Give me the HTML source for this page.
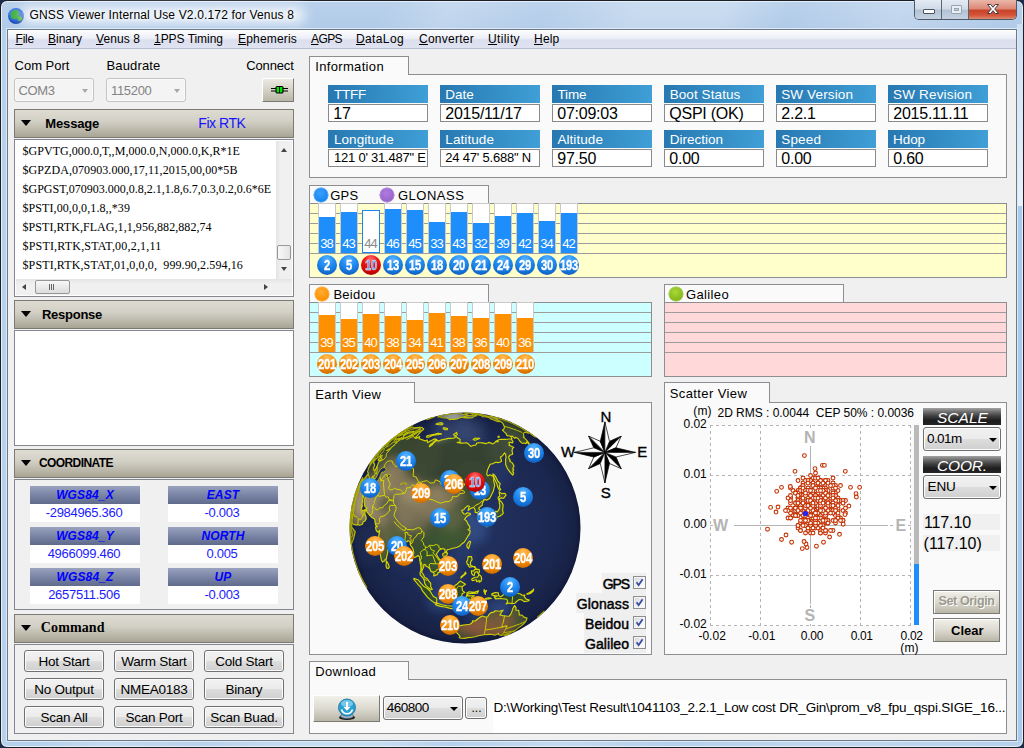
<!DOCTYPE html><html><head><meta charset="utf-8"><title>GNSS Viewer</title><style>*{box-sizing:border-box;margin:0;padding:0}
html,body{width:1024px;height:748px;overflow:hidden;background:#1b2c4e;}
body{font-family:"Liberation Sans",sans-serif;font-size:13px;color:#000;position:relative}
.a{position:absolute}
.t{position:absolute;white-space:pre;line-height:1}
#frame{left:0;top:0;width:1024px;height:748px;background:linear-gradient(115deg,rgba(255,255,255,0) 0,rgba(255,255,255,0) 28%,rgba(255,255,255,.2) 33%,rgba(255,255,255,.04) 40%,rgba(255,255,255,.26) 47%,rgba(255,255,255,.26) 53%,rgba(255,255,255,0) 58%,rgba(255,255,255,.2) 66%,rgba(255,255,255,0) 74%,rgba(255,255,255,.14) 86%,rgba(255,255,255,0) 100%),linear-gradient(#b9d1eb 0,#b0cae8 28px,#b6d1ec 30px);border:1px solid #1c2026;border-radius:7px 7px 7px 7px;box-shadow:inset 0 0 0 1px #e4effa}
#client{left:7px;top:29px;width:1010px;height:712px;background:#f0f0f0;border:1px solid #6d7986;box-shadow:0 0 0 1px #dce9f7}
#menubar{left:8px;top:30px;width:1008px;height:19px;background:linear-gradient(#fdfdfe 0,#eef0f8 45%,#dcdfee 55%,#dfe2f0 100%);border-bottom:1px solid #b8bfd3}
.hdr{position:absolute;left:14px;width:280px;height:29px;border:1px solid #7b7a74;background:linear-gradient(#dedcd2 0,#d3d0c6 40%,#b7b4a6 80%,#a7a494 100%);}
.tri{position:absolute;width:0;height:0;border-left:5px solid transparent;border-right:5px solid transparent;border-top:6px solid #000}
.box{position:absolute;left:14px;width:280px;border:1px solid #828790;background:#fff}
.tab{position:absolute;background:#fafafa;border:1px solid #8c8e91;border-bottom:none}
.panel{position:absolute;border:1px solid #8c8e91;background:#fafafa}
.lab{position:absolute;width:100px;height:18px;background:linear-gradient(90deg,#2878b1,#3f9fd6)}
.val{position:absolute;width:100px;height:18px;background:#fff;border:1px solid #8a8a8a}
.clab{position:absolute;width:110px;height:18px;background:linear-gradient(#9aa3be 0,#7a85a6 50%,#5f6a8c 100%)}
.cval{position:absolute;width:110px;height:18px;background:#fff}
.btn{position:absolute;width:80px;height:22px;border:1px solid #707070;border-radius:3px;background:linear-gradient(#f2f2f2 0,#ebebeb 48%,#dddddd 52%,#cfcfcf 100%);box-shadow:inset 0 0 0 1px #fcfcfc}
.ctr{position:absolute;white-space:pre;text-align:center}
.snr{position:absolute;width:16px;text-align:center;font-size:13px;line-height:13px;color:#fff;letter-spacing:-.8px;text-indent:-.8px}
.ball{position:absolute;width:20px;height:20px;border-radius:50%;text-align:center}
.ball i{display:block;font-style:normal;font-weight:bold;font-size:14px;line-height:14px;margin:3px -6px 0 -6px;color:#fff;letter-spacing:-.2px;transform:scaleX(.8);-webkit-text-stroke:.4px #fff;text-shadow:0 0 1px rgba(0,0,40,.3)}
.ball.blue{background:radial-gradient(circle at 50% 22%,#58b4ff 0,#2590f6 35%,#1678de 62%,#0a4ea8 100%)}
.ball.org{background:radial-gradient(circle at 50% 22%,#ffc060 0,#ff9a10 35%,#ee8200 62%,#b05a00 100%)}
.ball.red{background:radial-gradient(circle at 50% 22%,#ff7070 0,#f01818 35%,#d80808 62%,#8a0000 100%)}
.blk{position:absolute;width:78px;height:17px;background:linear-gradient(#a2a2a2 0,#707070 22%,#3e3e3e 48%,#1c1c1c 75%,#262626 100%)}
.cmb{position:absolute;width:78px;height:24px;border:1px solid #707070;border-radius:3px;background:linear-gradient(#f2f2f2 0,#ebebeb 48%,#dddddd 52%,#cfcfcf 100%);box-shadow:inset 0 0 0 1px #fcfcfc}
.arr{position:absolute;width:0;height:0;border-left:4px solid transparent;border-right:4px solid transparent;border-top:4px solid #000}
.obtn{position:absolute;width:67px;height:24px;border:1px solid #7b7a74;background:linear-gradient(#f1f0ea 0,#dcdad0 50%,#b9b6a7 100%);box-shadow:inset 1px 1px 0 #fff}
</style></head><body>
<div id="frame" class="a"></div>
<div class="a" style="left:8px;top:8px;width:16px;height:16px;border-radius:50%;background:radial-gradient(circle at 40% 35%,#5fb0ff 0,#1d55c8 55%,#0a2a80 100%);overflow:hidden"><div class="a" style="left:3px;top:2px;width:8px;height:9px;background:#3fae3a;border-radius:50% 40% 60% 30%"></div><div class="a" style="left:9px;top:8px;width:5px;height:5px;background:#3fae3a;border-radius:50%"></div></div>
<div class="a" style="left:20px;top:6px;width:286px;height:18px;background:rgba(255,255,255,.72);filter:blur(6px);border-radius:9px"></div>
<div class="t" style="left:29.50px;top:8.84px;font:12px 'Liberation Sans',sans-serif;line-height:12px;letter-spacing:0.161px;text-shadow:0 0 5px #fff,0 0 5px #fff;">GNSS Viewer Internal Use V2.0.172 for Venus 8</div>
<div class="a" style="left:914px;top:0;width:103px;height:20px;border:1px solid #4f5a66;border-top:none;border-radius:0 0 5px 5px;overflow:hidden;background:#c3d1e2"><div class="a" style="left:0;top:0;width:27px;height:19px;background:linear-gradient(#e3ebf4 0,#d0dbe8 48%,#b1c1d4 52%,#c4d2e2 100%);border-right:1px solid #5c6672"></div><div class="a" style="left:27px;top:0;width:27px;height:19px;background:linear-gradient(#e3ebf4 0,#d0dbe8 48%,#b1c1d4 52%,#c4d2e2 100%);border-right:1px solid #5c6672"></div><div class="a" style="left:54px;top:0;width:48px;height:19px;background:linear-gradient(#eab7a9 0,#dc8a78 45%,#c8432a 55%,#d4553a 80%,#dd8a70 100%)"></div><div class="a" style="left:8px;top:9px;width:12px;height:5px;background:#fff;border:1px solid #4a5462;border-radius:1px"></div><div class="a" style="left:36px;top:5px;width:11px;height:9px;border:1px solid #9aa3ae;background:#e8eef5;border-radius:1px"><div class="a" style="left:2px;top:2px;width:5px;height:3px;border:1px solid #9aa3ae;background:#c8d1dc"></div></div><svg class="a" style="left:71px;top:3px" width="14" height="12" viewBox="0 0 14 12"><path d="M1.5 1.5h3.2L7 4.3 9.3 1.5h3.2L8.7 6l3.8 4.5H9.3L7 7.7 4.7 10.5H1.5L5.3 6z" fill="#fff" stroke="#4a3a40" stroke-width="1"/></svg></div>
<div class="a" style="left:1017px;top:24px;width:6px;height:182px;background:linear-gradient(#cfe0f4,#e9f1fa)"></div><div class="a" style="left:1017px;top:206px;width:6px;height:535px;background:#abcaeb;box-shadow:inset 1px 0 0 #dce9f7,inset -1px 0 0 #e4effa"></div>
<div id="client" class="a"></div><div id="menubar" class="a"></div>
<div class="t" style="left:15.5px;top:32.84px;font:12px 'Liberation Sans',sans-serif;line-height:12px;letter-spacing:-0.211px"><u style="text-underline-offset:1px">F</u>ile</div>
<div class="t" style="left:48.0px;top:32.84px;font:12px 'Liberation Sans',sans-serif;line-height:12px;letter-spacing:-0.003px"><u style="text-underline-offset:1px">B</u>inary</div>
<div class="t" style="left:96.0px;top:32.84px;font:12px 'Liberation Sans',sans-serif;line-height:12px;letter-spacing:0.089px"><u style="text-underline-offset:1px">V</u>enus 8</div>
<div class="t" style="left:154.0px;top:32.84px;font:12px 'Liberation Sans',sans-serif;line-height:12px;letter-spacing:-0.034px"><u style="text-underline-offset:1px">1</u>PPS Timing</div>
<div class="t" style="left:238.0px;top:32.84px;font:12px 'Liberation Sans',sans-serif;line-height:12px;letter-spacing:0.182px"><u style="text-underline-offset:1px">E</u>phemeris</div>
<div class="t" style="left:311.0px;top:32.84px;font:12px 'Liberation Sans',sans-serif;line-height:12px;letter-spacing:-0.590px"><u style="text-underline-offset:1px">A</u>GPS</div>
<div class="t" style="left:356.0px;top:32.84px;font:12px 'Liberation Sans',sans-serif;line-height:12px;letter-spacing:0.375px"><u style="text-underline-offset:1px">D</u>ataLog</div>
<div class="t" style="left:419.0px;top:32.84px;font:12px 'Liberation Sans',sans-serif;line-height:12px;letter-spacing:0.257px"><u style="text-underline-offset:1px">C</u>onverter</div>
<div class="t" style="left:488.0px;top:32.84px;font:12px 'Liberation Sans',sans-serif;line-height:12px;letter-spacing:0.379px"><u style="text-underline-offset:1px">U</u>tility</div>
<div class="t" style="left:534.0px;top:32.84px;font:12px 'Liberation Sans',sans-serif;line-height:12px;letter-spacing:0.203px"><u style="text-underline-offset:1px">H</u>elp</div>
<div class="t" style="left:14.50px;top:59.00px;font:13px 'Liberation Sans',sans-serif;line-height:13px;letter-spacing:0.012px;">Com Port</div>
<div class="t" style="left:106.50px;top:59.00px;font:13px 'Liberation Sans',sans-serif;line-height:13px;letter-spacing:0.154px;">Baudrate</div>
<div class="t" style="left:246.30px;top:59.00px;font:13px 'Liberation Sans',sans-serif;line-height:13px;letter-spacing:-0.160px;">Connect</div>
<div class="a" style="left:14px;top:78px;width:80px;height:24px;border:1px solid #c3c3c3;border-radius:3px;background:#f4f4f4;box-shadow:inset 0 0 0 1px #fbfbfb"></div>
<div class="t" style="left:18.40px;top:83.80px;font:13px 'Liberation Sans',sans-serif;line-height:13px;letter-spacing:-0.316px;color:#838383;">COM3</div>
<div class="arr" style="left:82px;top:89px;border-top-color:#a8a8a8;border-left-width:3.5px;border-right-width:3.5px"></div>
<div class="a" style="left:106px;top:78px;width:80px;height:24px;border:1px solid #c3c3c3;border-radius:3px;background:#f4f4f4;box-shadow:inset 0 0 0 1px #fbfbfb"></div>
<div class="t" style="left:111.00px;top:83.80px;font:13px 'Liberation Sans',sans-serif;line-height:13px;letter-spacing:-0.320px;color:#838383;">115200</div>
<div class="arr" style="left:174px;top:89px;border-top-color:#a8a8a8;border-left-width:3.5px;border-right-width:3.5px"></div>
<div class="a" style="left:262px;top:78px;width:32px;height:24px;border:1px solid #7a7a72;border-top-color:#fff;border-left-color:#fff;background:linear-gradient(#eceae2,#d2cfc3 55%,#b9b6a7)"><svg class="a" style="left:8px;top:6px" width="17" height="10" viewBox="0 0 17 10"><rect x="0" y="3" width="17" height="1" fill="#000"/><rect x="0" y="5.5" width="17" height="1" fill="#000"/><rect x="4.5" y="1" width="8" height="7.5" rx="1.5" fill="#000"/><rect x="5.6" y="2" width="2.4" height="5.5" fill="#00e400"/><rect x="9" y="2" width="2.4" height="5.5" fill="#00e400"/></svg></div>
<div class="hdr" style="top:109px"></div><div class="tri" style="left:21px;top:120px"></div>
<div class="t" style="left:45.30px;top:116.70px;font:bold 13px 'Liberation Sans',sans-serif;line-height:13px;letter-spacing:-0.146px;">Message</div>
<div class="t" style="left:198.30px;top:115.85px;font:14px 'Liberation Sans',sans-serif;line-height:14px;letter-spacing:-0.445px;color:#1414ff;">Fix RTK</div>
<div class="box" style="top:139px;height:158px"></div>
<div class="t" style="left:22.50px;top:144.65px;font:12px 'Liberation Serif',serif;line-height:12px;letter-spacing:0.045px;">$GPVTG,000.0,T,,M,000.0,N,000.0,K,R*1E</div>
<div class="t" style="left:22.50px;top:163.75px;font:12px 'Liberation Serif',serif;line-height:12px;letter-spacing:0.066px;">$GPZDA,070903.000,17,11,2015,00,00*5B</div>
<div class="t" style="left:22.50px;top:182.85px;font:12px 'Liberation Serif',serif;line-height:12px;letter-spacing:0.001px;">$GPGST,070903.000,0.8,2.1,1.8,6.7,0.3,0.2,0.6*6E</div>
<div class="t" style="left:22.50px;top:201.95px;font:12px 'Liberation Serif',serif;line-height:12px;letter-spacing:0.086px;">$PSTI,00,0,0,1.8,,*39</div>
<div class="t" style="left:22.50px;top:221.05px;font:12px 'Liberation Serif',serif;line-height:12px;letter-spacing:0.055px;">$PSTI,RTK,FLAG,1,1,956,882,882,74</div>
<div class="t" style="left:22.50px;top:240.15px;font:12px 'Liberation Serif',serif;line-height:12px;letter-spacing:0.190px;">$PSTI,RTK,STAT,00,2,1,11</div>
<div class="t" style="left:22.50px;top:259.25px;font:12px 'Liberation Serif',serif;line-height:12px;letter-spacing:0.115px;">$PSTI,RTK,STAT,01,0,0,0,  999.90,2.594,16</div>
<div class="a" style="left:276px;top:141px;width:16px;height:138px;background:linear-gradient(90deg,#e4e4e4,#f0f0f0 30%,#f0f0f0)"></div>
<div class="a" style="left:16px;top:279px;width:276px;height:16px;background:linear-gradient(#e4e4e4,#f0f0f0 30%,#f0f0f0)"></div>
<div class="a" style="left:280.5px;top:148px;width:0;height:0;border-left:3.75px solid transparent;border-right:3.75px solid transparent;border-bottom:4.5px solid #444"></div>
<div class="a" style="left:280.5px;top:267px;width:0;height:0;border-left:3.75px solid transparent;border-right:3.75px solid transparent;border-top:4.5px solid #444"></div>
<div class="a" style="left:277px;top:245px;width:14px;height:15px;border:1px solid #979797;border-radius:2px;background:linear-gradient(90deg,#f8f8f8,#e4e4e4)"></div>
<div class="a" style="left:22px;top:283.5px;width:0;height:0;border-top:3.75px solid transparent;border-bottom:3.75px solid transparent;border-right:4.5px solid #444"></div>
<div class="a" style="left:264px;top:283.5px;width:0;height:0;border-top:3.75px solid transparent;border-bottom:3.75px solid transparent;border-left:4.5px solid #444"></div>
<div class="a" style="left:35px;top:280px;width:35px;height:14px;border:1px solid #979797;border-radius:2px;background:linear-gradient(#f8f8f8,#dcdcdc)"><div class="a" style="left:13px;top:3px;width:1px;height:6px;background:#666;box-shadow:2px 0 0 #666,4px 0 0 #666"></div></div>
<div class="hdr" style="top:300px"></div><div class="tri" style="left:21px;top:311px"></div>
<div class="t" style="left:42.00px;top:307.70px;font:bold 13px 'Liberation Sans',sans-serif;line-height:13px;letter-spacing:-0.268px;">Response</div>
<div class="box" style="top:330px;height:116px"></div>
<div class="hdr" style="top:449px"></div><div class="tri" style="left:21px;top:460px"></div>
<div class="t" style="left:38.90px;top:457.34px;font:bold 12px 'Liberation Sans',sans-serif;line-height:12px;letter-spacing:-0.568px;">COORDINATE</div>
<div class="box" style="top:479px;height:131px;background:#f0f0f0"></div>
<div class="clab" style="left:30px;top:486px"></div><div class="cval" style="left:30px;top:504px"></div>
<div class="ctr" style="left:30px;top:488.84px;width:110px;font:italic bold 12px 'Liberation Sans',sans-serif;line-height:12px;color:#0000ff;letter-spacing:.14px">WGS84_X</div>
<div class="ctr" style="left:29px;top:506.00px;width:110px;font:13px 'Liberation Sans',sans-serif;line-height:13px;color:#1a1aff;letter-spacing:-.3px">-2984965.360</div>
<div class="clab" style="left:168px;top:486px"></div><div class="cval" style="left:168px;top:504px"></div>
<div class="ctr" style="left:168px;top:488.84px;width:110px;font:italic bold 12px 'Liberation Sans',sans-serif;line-height:12px;color:#0000ff;letter-spacing:.14px">EAST</div>
<div class="ctr" style="left:167px;top:506.00px;width:110px;font:13px 'Liberation Sans',sans-serif;line-height:13px;color:#1a1aff;letter-spacing:-.3px">-0.003</div>
<div class="clab" style="left:30px;top:527px"></div><div class="cval" style="left:30px;top:545px"></div>
<div class="ctr" style="left:30px;top:529.84px;width:110px;font:italic bold 12px 'Liberation Sans',sans-serif;line-height:12px;color:#0000ff;letter-spacing:.14px">WGS84_Y</div>
<div class="ctr" style="left:29px;top:547.00px;width:110px;font:13px 'Liberation Sans',sans-serif;line-height:13px;color:#1a1aff;letter-spacing:-.3px">4966099.460</div>
<div class="clab" style="left:168px;top:527px"></div><div class="cval" style="left:168px;top:545px"></div>
<div class="ctr" style="left:168px;top:529.84px;width:110px;font:italic bold 12px 'Liberation Sans',sans-serif;line-height:12px;color:#0000ff;letter-spacing:.14px">NORTH</div>
<div class="ctr" style="left:167px;top:547.00px;width:110px;font:13px 'Liberation Sans',sans-serif;line-height:13px;color:#1a1aff;letter-spacing:-.3px">0.005</div>
<div class="clab" style="left:30px;top:568px"></div><div class="cval" style="left:30px;top:586px"></div>
<div class="ctr" style="left:30px;top:570.84px;width:110px;font:italic bold 12px 'Liberation Sans',sans-serif;line-height:12px;color:#0000ff;letter-spacing:.14px">WGS84_Z</div>
<div class="ctr" style="left:29px;top:588.00px;width:110px;font:13px 'Liberation Sans',sans-serif;line-height:13px;color:#1a1aff;letter-spacing:-.3px">2657511.506</div>
<div class="clab" style="left:168px;top:568px"></div><div class="cval" style="left:168px;top:586px"></div>
<div class="ctr" style="left:168px;top:570.84px;width:110px;font:italic bold 12px 'Liberation Sans',sans-serif;line-height:12px;color:#0000ff;letter-spacing:.14px">UP</div>
<div class="ctr" style="left:167px;top:588.00px;width:110px;font:13px 'Liberation Sans',sans-serif;line-height:13px;color:#1a1aff;letter-spacing:-.3px">-0.003</div>
<div class="hdr" style="top:614px"></div><div class="tri" style="left:21px;top:625px"></div>
<div class="t" style="left:40.80px;top:621.48px;font:bold 14px 'Liberation Serif',serif;line-height:14px;letter-spacing:0.126px;">Command</div>
<div class="box" style="top:644px;height:90px;background:#f0f0f0"></div>
<div class="btn" style="left:24px;top:650px"></div>
<div class="ctr" style="left:24px;top:654.97px;width:80px;font:13.5px 'Liberation Sans',sans-serif;line-height:13.5px;letter-spacing:-.25px">Hot Start</div>
<div class="btn" style="left:114px;top:650px"></div>
<div class="ctr" style="left:114px;top:654.97px;width:80px;font:13.5px 'Liberation Sans',sans-serif;line-height:13.5px;letter-spacing:-.25px">Warm Start</div>
<div class="btn" style="left:204px;top:650px"></div>
<div class="ctr" style="left:204px;top:654.97px;width:80px;font:13.5px 'Liberation Sans',sans-serif;line-height:13.5px;letter-spacing:-.25px">Cold Start</div>
<div class="btn" style="left:24px;top:678px"></div>
<div class="ctr" style="left:24px;top:682.97px;width:80px;font:13.5px 'Liberation Sans',sans-serif;line-height:13.5px;letter-spacing:-.25px">No Output</div>
<div class="btn" style="left:114px;top:678px"></div>
<div class="ctr" style="left:114px;top:682.97px;width:80px;font:13.5px 'Liberation Sans',sans-serif;line-height:13.5px;letter-spacing:-.25px">NMEA0183</div>
<div class="btn" style="left:204px;top:678px"></div>
<div class="ctr" style="left:204px;top:682.97px;width:80px;font:13.5px 'Liberation Sans',sans-serif;line-height:13.5px;letter-spacing:-.25px">Binary</div>
<div class="btn" style="left:24px;top:706px"></div>
<div class="ctr" style="left:24px;top:710.97px;width:80px;font:13.5px 'Liberation Sans',sans-serif;line-height:13.5px;letter-spacing:-.25px">Scan All</div>
<div class="btn" style="left:114px;top:706px"></div>
<div class="ctr" style="left:114px;top:710.97px;width:80px;font:13.5px 'Liberation Sans',sans-serif;line-height:13.5px;letter-spacing:-.25px">Scan Port</div>
<div class="btn" style="left:204px;top:706px"></div>
<div class="ctr" style="left:204px;top:710.97px;width:80px;font:13.5px 'Liberation Sans',sans-serif;line-height:13.5px;letter-spacing:-.25px">Scan Buad.</div>
<div class="panel" style="left:309px;top:74px;width:698px;height:104px"></div>
<div class="tab" style="left:309px;top:56px;width:100px;height:19px"></div>
<div class="t" style="left:315.20px;top:60.00px;font:13px 'Liberation Sans',sans-serif;line-height:13px;letter-spacing:0.341px;">Information</div>
<div class="lab" style="left:328px;top:85px"></div><div class="val" style="left:328px;top:104px"></div>
<div class="t" style="left:334.00px;top:88.07px;font:13.5px 'Liberation Sans',sans-serif;line-height:13.5px;letter-spacing:-0.250px;color:#fff;">TTFF</div>
<div class="t" style="left:333.30px;top:106.26px;font:16px 'Liberation Sans',sans-serif;line-height:16px;letter-spacing:-.25px;">17</div>
<div class="lab" style="left:440px;top:85px"></div><div class="val" style="left:440px;top:104px"></div>
<div class="t" style="left:445.30px;top:88.07px;font:13.5px 'Liberation Sans',sans-serif;line-height:13.5px;letter-spacing:0.017px;color:#fff;">Date</div>
<div class="t" style="left:445.30px;top:106.26px;font:16px 'Liberation Sans',sans-serif;line-height:16px;letter-spacing:-.25px;">2015/11/17</div>
<div class="lab" style="left:552px;top:85px"></div><div class="val" style="left:552px;top:104px"></div>
<div class="t" style="left:557.40px;top:88.07px;font:13.5px 'Liberation Sans',sans-serif;line-height:13.5px;letter-spacing:-0.100px;color:#fff;">Time</div>
<div class="t" style="left:557.30px;top:106.26px;font:16px 'Liberation Sans',sans-serif;line-height:16px;letter-spacing:-.25px;">07:09:03</div>
<div class="lab" style="left:664px;top:85px"></div><div class="val" style="left:664px;top:104px"></div>
<div class="t" style="left:669.70px;top:88.07px;font:13.5px 'Liberation Sans',sans-serif;line-height:13.5px;letter-spacing:0.082px;color:#fff;">Boot Status</div>
<div class="t" style="left:669.30px;top:106.26px;font:16px 'Liberation Sans',sans-serif;line-height:16px;letter-spacing:-.25px;">QSPI (OK)</div>
<div class="lab" style="left:776px;top:85px"></div><div class="val" style="left:776px;top:104px"></div>
<div class="t" style="left:781.20px;top:88.07px;font:13.5px 'Liberation Sans',sans-serif;line-height:13.5px;letter-spacing:0.137px;color:#fff;">SW Version</div>
<div class="t" style="left:781.30px;top:106.26px;font:16px 'Liberation Sans',sans-serif;line-height:16px;letter-spacing:-.25px;">2.2.1</div>
<div class="lab" style="left:888px;top:85px"></div><div class="val" style="left:888px;top:104px"></div>
<div class="t" style="left:893.10px;top:88.07px;font:13.5px 'Liberation Sans',sans-serif;line-height:13.5px;letter-spacing:0.165px;color:#fff;">SW Revision</div>
<div class="t" style="left:893.30px;top:106.26px;font:16px 'Liberation Sans',sans-serif;line-height:16px;letter-spacing:-.25px;">2015.11.11</div>
<div class="lab" style="left:328px;top:130px"></div><div class="val" style="left:328px;top:149px"></div>
<div class="t" style="left:334.00px;top:133.27px;font:13.5px 'Liberation Sans',sans-serif;line-height:13.5px;letter-spacing:0.043px;color:#fff;">Longitude</div>
<div class="t" style="left:334.00px;top:151.20px;font:13px 'Liberation Sans',sans-serif;line-height:13px;letter-spacing:-0.231px;">121 0' 31.487&quot; E</div>
<div class="lab" style="left:440px;top:130px"></div><div class="val" style="left:440px;top:149px"></div>
<div class="t" style="left:445.30px;top:133.27px;font:13.5px 'Liberation Sans',sans-serif;line-height:13.5px;letter-spacing:0.082px;color:#fff;">Latitude</div>
<div class="t" style="left:445.30px;top:151.20px;font:13px 'Liberation Sans',sans-serif;line-height:13px;letter-spacing:-0.205px;">24 47' 5.688&quot; N</div>
<div class="lab" style="left:552px;top:130px"></div><div class="val" style="left:552px;top:149px"></div>
<div class="t" style="left:557.40px;top:133.27px;font:13.5px 'Liberation Sans',sans-serif;line-height:13.5px;letter-spacing:0.071px;color:#fff;">Altitude</div>
<div class="t" style="left:557.30px;top:151.46px;font:16px 'Liberation Sans',sans-serif;line-height:16px;letter-spacing:-.25px;">97.50</div>
<div class="lab" style="left:664px;top:130px"></div><div class="val" style="left:664px;top:149px"></div>
<div class="t" style="left:669.70px;top:133.27px;font:13.5px 'Liberation Sans',sans-serif;line-height:13.5px;letter-spacing:0.013px;color:#fff;">Direction</div>
<div class="t" style="left:669.30px;top:151.46px;font:16px 'Liberation Sans',sans-serif;line-height:16px;letter-spacing:-.25px;">0.00</div>
<div class="lab" style="left:776px;top:130px"></div><div class="val" style="left:776px;top:149px"></div>
<div class="t" style="left:781.20px;top:133.27px;font:13.5px 'Liberation Sans',sans-serif;line-height:13.5px;letter-spacing:0.191px;color:#fff;">Speed</div>
<div class="t" style="left:781.30px;top:151.46px;font:16px 'Liberation Sans',sans-serif;line-height:16px;letter-spacing:-.25px;">0.00</div>
<div class="lab" style="left:888px;top:130px"></div><div class="val" style="left:888px;top:149px"></div>
<div class="t" style="left:893.10px;top:133.27px;font:13.5px 'Liberation Sans',sans-serif;line-height:13.5px;letter-spacing:-0.095px;color:#fff;">Hdop</div>
<div class="t" style="left:893.30px;top:151.46px;font:16px 'Liberation Sans',sans-serif;line-height:16px;letter-spacing:-.25px;">0.60</div>
<div class="panel" style="left:309px;top:203px;width:698px;height:75px;background:#ffffcc"></div>
<div class="a" style="left:310px;top:213px;width:696px;height:1px;background:#9c9c9c"></div>
<div class="a" style="left:310px;top:223px;width:696px;height:1px;background:#9c9c9c"></div>
<div class="a" style="left:310px;top:233px;width:696px;height:1px;background:#9c9c9c"></div>
<div class="a" style="left:310px;top:243px;width:696px;height:1px;background:#9c9c9c"></div>
<div class="a" style="left:310px;top:253px;width:696px;height:1px;background:#9c9c9c"></div>
<div class="tab" style="left:309px;top:185px;width:180px;height:18px"></div>
<div class="a" style="left:314.0px;top:188.3px;width:14px;height:14px;border-radius:50%;background:radial-gradient(circle at 45% 35%,#3aa0ff 0,#1c86ee 70%);box-shadow:0 0 0 .5px #1c86ee"></div>
<div class="t" style="left:330.20px;top:188.90px;font:13px 'Liberation Sans',sans-serif;line-height:13px;letter-spacing:0.244px;">GPS</div>
<div class="a" style="left:380.0px;top:188.3px;width:14px;height:14px;border-radius:50%;background:radial-gradient(circle at 45% 35%,#b07be0 0,#9966cc 70%);box-shadow:0 0 0 .5px #9966cc"></div>
<div class="t" style="left:398.00px;top:188.90px;font:13px 'Liberation Sans',sans-serif;line-height:13px;letter-spacing:0.506px;">GLONASS</div>
<div class="panel" style="left:309px;top:302px;width:343px;height:75px;background:#ccffff"></div>
<div class="a" style="left:310px;top:312px;width:341px;height:1px;background:#9c9c9c"></div>
<div class="a" style="left:310px;top:322px;width:341px;height:1px;background:#9c9c9c"></div>
<div class="a" style="left:310px;top:332px;width:341px;height:1px;background:#9c9c9c"></div>
<div class="a" style="left:310px;top:342px;width:341px;height:1px;background:#9c9c9c"></div>
<div class="a" style="left:310px;top:352px;width:341px;height:1px;background:#9c9c9c"></div>
<div class="tab" style="left:309px;top:284px;width:180px;height:18px"></div>
<div class="a" style="left:315.0px;top:287.0px;width:14px;height:14px;border-radius:50%;background:radial-gradient(circle at 45% 35%,#ffad33 0,#ff9000 70%);box-shadow:0 0 0 .5px #ff9000"></div>
<div class="t" style="left:333.40px;top:287.80px;font:13px 'Liberation Sans',sans-serif;line-height:13px;letter-spacing:0.286px;">Beidou</div>
<div class="panel" style="left:664px;top:302px;width:343px;height:75px;background:#ffd9d9"></div>
<div class="a" style="left:665px;top:312px;width:341px;height:1px;background:#9c9c9c"></div>
<div class="a" style="left:665px;top:322px;width:341px;height:1px;background:#9c9c9c"></div>
<div class="a" style="left:665px;top:332px;width:341px;height:1px;background:#9c9c9c"></div>
<div class="a" style="left:665px;top:342px;width:341px;height:1px;background:#9c9c9c"></div>
<div class="a" style="left:665px;top:352px;width:341px;height:1px;background:#9c9c9c"></div>
<div class="tab" style="left:664px;top:284px;width:180px;height:18px"></div>
<div class="a" style="left:669.2px;top:287.0px;width:14px;height:14px;border-radius:50%;background:radial-gradient(circle at 45% 35%,#a8d838 0,#86b81c 70%);box-shadow:0 0 0 .5px #86b81c"></div>
<div class="t" style="left:686.00px;top:287.70px;font:13px 'Liberation Sans',sans-serif;line-height:13px;letter-spacing:0.362px;">Galileo</div>
<div class="a" style="left:318px;top:203px;width:18px;height:50px;background:#fff;border:1px solid #c9c9c9;border-bottom:none"></div>
<div class="a" style="left:319px;top:217px;width:16px;height:36px;background:#1e8efc"></div>
<div class="snr" style="left:319px;top:236.70px">38</div>
<div class="ball blue" style="left:317px;top:255px"><i>2</i></div>
<div class="a" style="left:340px;top:203px;width:18px;height:50px;background:#fff;border:1px solid #c9c9c9;border-bottom:none"></div>
<div class="a" style="left:341px;top:212px;width:16px;height:41px;background:#1e8efc"></div>
<div class="snr" style="left:341px;top:236.70px">43</div>
<div class="ball blue" style="left:339px;top:255px"><i>5</i></div>
<div class="a" style="left:362px;top:210px;width:18px;height:43px;background:#fff;border:1px solid #1c86ee"></div>
<div class="snr" style="left:363px;top:236.70px;color:#8a8a8a">44</div>
<div class="ball red" style="left:361px;top:255px"><i style="color:#5aa8ff">10</i></div>
<div class="a" style="left:384px;top:203px;width:18px;height:50px;background:#fff;border:1px solid #c9c9c9;border-bottom:none"></div>
<div class="a" style="left:385px;top:209px;width:16px;height:44px;background:#1e8efc"></div>
<div class="snr" style="left:385px;top:236.70px">46</div>
<div class="ball blue" style="left:383px;top:255px"><i>13</i></div>
<div class="a" style="left:406px;top:203px;width:18px;height:50px;background:#fff;border:1px solid #c9c9c9;border-bottom:none"></div>
<div class="a" style="left:407px;top:210px;width:16px;height:43px;background:#1e8efc"></div>
<div class="snr" style="left:407px;top:236.70px">45</div>
<div class="ball blue" style="left:405px;top:255px"><i>15</i></div>
<div class="a" style="left:428px;top:203px;width:18px;height:50px;background:#fff;border:1px solid #c9c9c9;border-bottom:none"></div>
<div class="a" style="left:429px;top:222px;width:16px;height:31px;background:#1e8efc"></div>
<div class="snr" style="left:429px;top:236.70px">33</div>
<div class="ball blue" style="left:427px;top:255px"><i>18</i></div>
<div class="a" style="left:450px;top:203px;width:18px;height:50px;background:#fff;border:1px solid #c9c9c9;border-bottom:none"></div>
<div class="a" style="left:451px;top:212px;width:16px;height:41px;background:#1e8efc"></div>
<div class="snr" style="left:451px;top:236.70px">43</div>
<div class="ball blue" style="left:449px;top:255px"><i>20</i></div>
<div class="a" style="left:472px;top:203px;width:18px;height:50px;background:#fff;border:1px solid #c9c9c9;border-bottom:none"></div>
<div class="a" style="left:473px;top:223px;width:16px;height:30px;background:#1e8efc"></div>
<div class="snr" style="left:473px;top:236.70px">32</div>
<div class="ball blue" style="left:471px;top:255px"><i>21</i></div>
<div class="a" style="left:494px;top:203px;width:18px;height:50px;background:#fff;border:1px solid #c9c9c9;border-bottom:none"></div>
<div class="a" style="left:495px;top:216px;width:16px;height:37px;background:#1e8efc"></div>
<div class="snr" style="left:495px;top:236.70px">39</div>
<div class="ball blue" style="left:493px;top:255px"><i>24</i></div>
<div class="a" style="left:516px;top:203px;width:18px;height:50px;background:#fff;border:1px solid #c9c9c9;border-bottom:none"></div>
<div class="a" style="left:517px;top:213px;width:16px;height:40px;background:#1e8efc"></div>
<div class="snr" style="left:517px;top:236.70px">42</div>
<div class="ball blue" style="left:515px;top:255px"><i>29</i></div>
<div class="a" style="left:538px;top:203px;width:18px;height:50px;background:#fff;border:1px solid #c9c9c9;border-bottom:none"></div>
<div class="a" style="left:539px;top:221px;width:16px;height:32px;background:#1e8efc"></div>
<div class="snr" style="left:539px;top:236.70px">34</div>
<div class="ball blue" style="left:537px;top:255px"><i>30</i></div>
<div class="a" style="left:560px;top:203px;width:18px;height:50px;background:#fff;border:1px solid #c9c9c9;border-bottom:none"></div>
<div class="a" style="left:561px;top:213px;width:16px;height:40px;background:#1e8efc"></div>
<div class="snr" style="left:561px;top:236.70px">42</div>
<div class="ball blue" style="left:559px;top:255px"><i>193</i></div>
<div class="a" style="left:318px;top:302px;width:18px;height:50px;background:#fff;border:1px solid #c9c9c9;border-bottom:none"></div>
<div class="a" style="left:319px;top:315px;width:16px;height:37px;background:#ff9000"></div>
<div class="snr" style="left:319px;top:335.70px">39</div>
<div class="ball org" style="left:317px;top:354px"><i>201</i></div>
<div class="a" style="left:340px;top:302px;width:18px;height:50px;background:#fff;border:1px solid #c9c9c9;border-bottom:none"></div>
<div class="a" style="left:341px;top:319px;width:16px;height:33px;background:#ff9000"></div>
<div class="snr" style="left:341px;top:335.70px">35</div>
<div class="ball org" style="left:339px;top:354px"><i>202</i></div>
<div class="a" style="left:362px;top:302px;width:18px;height:50px;background:#fff;border:1px solid #c9c9c9;border-bottom:none"></div>
<div class="a" style="left:363px;top:314px;width:16px;height:38px;background:#ff9000"></div>
<div class="snr" style="left:363px;top:335.70px">40</div>
<div class="ball org" style="left:361px;top:354px"><i>203</i></div>
<div class="a" style="left:384px;top:302px;width:18px;height:50px;background:#fff;border:1px solid #c9c9c9;border-bottom:none"></div>
<div class="a" style="left:385px;top:316px;width:16px;height:36px;background:#ff9000"></div>
<div class="snr" style="left:385px;top:335.70px">38</div>
<div class="ball org" style="left:383px;top:354px"><i>204</i></div>
<div class="a" style="left:406px;top:302px;width:18px;height:50px;background:#fff;border:1px solid #c9c9c9;border-bottom:none"></div>
<div class="a" style="left:407px;top:320px;width:16px;height:32px;background:#ff9000"></div>
<div class="snr" style="left:407px;top:335.70px">34</div>
<div class="ball org" style="left:405px;top:354px"><i>205</i></div>
<div class="a" style="left:428px;top:302px;width:18px;height:50px;background:#fff;border:1px solid #c9c9c9;border-bottom:none"></div>
<div class="a" style="left:429px;top:313px;width:16px;height:39px;background:#ff9000"></div>
<div class="snr" style="left:429px;top:335.70px">41</div>
<div class="ball org" style="left:427px;top:354px"><i>206</i></div>
<div class="a" style="left:450px;top:302px;width:18px;height:50px;background:#fff;border:1px solid #c9c9c9;border-bottom:none"></div>
<div class="a" style="left:451px;top:316px;width:16px;height:36px;background:#ff9000"></div>
<div class="snr" style="left:451px;top:335.70px">38</div>
<div class="ball org" style="left:449px;top:354px"><i>207</i></div>
<div class="a" style="left:472px;top:302px;width:18px;height:50px;background:#fff;border:1px solid #c9c9c9;border-bottom:none"></div>
<div class="a" style="left:473px;top:318px;width:16px;height:34px;background:#ff9000"></div>
<div class="snr" style="left:473px;top:335.70px">36</div>
<div class="ball org" style="left:471px;top:354px"><i>208</i></div>
<div class="a" style="left:494px;top:302px;width:18px;height:50px;background:#fff;border:1px solid #c9c9c9;border-bottom:none"></div>
<div class="a" style="left:495px;top:314px;width:16px;height:38px;background:#ff9000"></div>
<div class="snr" style="left:495px;top:335.70px">40</div>
<div class="ball org" style="left:493px;top:354px"><i>209</i></div>
<div class="a" style="left:516px;top:302px;width:18px;height:50px;background:#fff;border:1px solid #c9c9c9;border-bottom:none"></div>
<div class="a" style="left:517px;top:318px;width:16px;height:34px;background:#ff9000"></div>
<div class="snr" style="left:517px;top:335.70px">36</div>
<div class="ball org" style="left:515px;top:354px"><i>210</i></div>
<div class="panel" style="left:309px;top:402px;width:343px;height:253px"></div>
<div class="tab" style="left:309px;top:382px;width:106px;height:21px"></div>
<div class="t" style="left:315.20px;top:388.00px;font:13px 'Liberation Sans',sans-serif;line-height:13px;letter-spacing:0.346px;">Earth View</div>
<svg class="a" style="left:345px;top:408px" width="240" height="240" viewBox="345 408 240 240"><defs><clipPath id="gc"><circle cx="465" cy="528" r="115.5"/></clipPath><clipPath id="lc"><path d="M468.3 415.4 L467.6 414.8 L466.8 414.4 L465.8 414.3 L464.8 414.3 L463.8 414.3 L462.8 414.3 L461.8 413.7 L460.5 413.2 L459.1 412.9 L457.5 412.9 L455.7 413.0 L456.7 413.5 L453.1 413.8 L450.4 414.1 L447.6 414.5 L446.3 414.7 L445.7 414.1 L444.6 414.3 L443.6 414.6 L442.8 414.9 L442.0 415.1 L441.0 415.5 L440.1 415.8 L439.3 416.1 L438.5 416.5 L437.8 416.9 L440.2 416.8 L441.1 417.3 L442.2 417.7 L446.5 418.0 L448.7 418.7 L449.1 419.2 L449.7 419.7 L450.6 419.5 L451.5 419.4 L452.4 419.3 L453.3 419.3 L454.1 419.3 L454.9 419.3 L455.4 419.2 L455.9 419.1 L456.3 419.0 L456.8 418.9 L457.3 418.9 L457.6 418.7 L458.0 418.5 L458.4 418.3 L458.8 418.1 L459.2 418.0 L459.7 417.8 L460.2 417.7 L460.7 417.6 L461.3 417.5 L461.8 417.4 L462.4 417.3 L462.9 417.2 L463.5 417.0 L464.2 416.8 L464.9 416.6 L465.6 416.4 L466.9 415.8Z M476.8 415.8 L476.0 415.6 L475.1 415.4 L474.3 415.2 L473.4 415.1 L472.5 414.9 L470.8 415.3 L469.3 415.5 L468.0 415.7 L467.0 415.9 L466.1 416.1 L465.3 416.4 L464.5 416.6 L463.5 417.5 L464.0 417.6 L464.5 417.7 L465.0 417.8 L465.5 417.9 L466.1 417.9 L466.6 417.9 L467.2 417.9 L467.8 417.9 L468.4 417.9 L469.0 417.9 L469.6 418.0 L470.6 417.9 L471.6 417.8 L472.6 417.7 L473.2 417.1 L473.6 416.5Z M496.7 421.2 L495.5 420.7 L494.4 420.2 L493.2 419.8 L492.0 419.3 L490.8 418.9 L490.2 418.5 L489.6 418.1 L489.0 417.8 L488.2 417.4 L487.5 417.1 L484.8 416.8 L482.1 416.6 L481.9 416.2 L481.6 415.7 L480.7 415.4 L479.7 415.2 L478.6 414.9 L477.6 414.7 L476.5 414.5 L475.3 414.3 L474.5 414.0 L473.5 413.8 L472.6 413.6 L471.6 413.4 L470.5 413.2 L469.5 413.0 L468.3 412.8 L467.0 412.7 L465.6 412.6 L464.1 412.5 L466.1 413.2 L467.9 413.2 L469.8 413.3 L471.6 413.4 L473.3 413.5 L475.0 413.6 L476.6 413.8 L478.2 414.0 L476.0 413.7 L474.0 412.9 L475.4 413.0 L476.7 413.2 L477.8 413.4 L478.8 413.7 L479.7 414.0 L480.7 414.2 L481.7 414.5 L482.6 414.8 L483.5 415.1 L484.3 415.4 L485.9 415.7 L487.4 416.0 L489.0 416.3 L490.6 416.7 L492.2 417.1 L493.1 417.5 L494.0 417.9 L494.8 418.3 L495.6 418.8 L496.3 419.2 L497.0 419.7 L497.7 420.1 L498.3 420.6 L498.8 421.1 L499.3 421.6Z M434.1 416.9 L433.7 417.2 L432.3 417.7 L430.9 418.2 L428.6 419.1 L426.7 419.7 L427.0 419.3 L428.3 418.7 L431.3 417.6Z M441.2 422.5 L441.9 422.9 L442.6 423.2 L442.7 423.4 L442.9 423.7 L443.0 424.0 L442.5 424.4 L442.0 424.9 L440.3 424.7 L438.7 424.6 L437.3 424.4 L435.9 424.1 L437.9 423.3Z M443.8 427.5 L444.4 427.7 L444.9 427.8 L445.5 428.0 L446.0 428.1 L446.5 428.3 L447.0 428.4 L447.6 428.6 L447.4 429.2 L447.2 429.7 L446.3 429.7 L445.4 429.6 L444.5 429.5 L444.1 429.3 L443.7 429.0 L443.4 428.7 L443.1 428.5 L443.4 428.0Z M402.7 431.5 L401.5 432.4 L400.3 433.1 L398.8 433.3 L398.8 433.4 L400.5 432.3 L401.8 431.4 L403.9 430.2 L406.6 428.5 L409.5 427.0 L411.8 425.8 L412.6 425.3 L411.2 425.9 L408.0 427.6 L406.7 428.4 L404.6 429.6 L405.5 429.0 L404.3 430.6 L404.6 430.4 L402.6 431.6Z M421.6 430.8 L420.4 432.2 L419.3 433.3 L418.3 434.5 L417.3 435.7 L416.4 437.0 L414.3 437.6 L415.1 438.1 L415.9 438.5 L419.7 436.5 L419.3 437.6 L419.0 438.7 L420.0 439.0 L421.1 439.4 L422.1 439.7 L423.1 440.1 L424.1 440.5 L425.1 440.9 L427.2 440.0 L427.3 441.3 L427.6 442.6 L431.3 440.4 L434.4 438.9 L435.4 439.1 L436.5 439.3 L433.2 442.4 L430.0 444.9 L429.4 446.7 L432.1 444.8 L434.5 441.9 L437.2 440.2 L438.2 441.2 L441.1 439.9 L442.8 439.6 L444.5 439.2 L446.1 438.9 L448.2 438.4 L449.6 438.4 L450.9 438.4 L452.3 438.3 L453.7 438.1 L455.1 437.4 L456.4 436.7 L457.4 437.8 L458.2 438.3 L459.1 438.8 L460.1 439.3 L460.0 442.2 L458.6 442.3 L457.2 442.4 L458.4 442.7 L459.5 442.9 L461.1 443.1 L462.7 443.1 L463.9 443.0 L465.2 442.9 L466.4 442.7 L468.6 444.1 L470.8 446.4 L473.0 445.4 L474.4 445.3 L475.8 445.1 L476.8 443.0 L478.1 442.9 L479.4 442.8 L480.7 442.7 L482.2 442.9 L483.8 443.1 L485.7 443.6 L486.8 443.2 L488.0 442.8 L489.1 442.4 L491.5 443.3 L492.5 443.9 L493.7 443.3 L494.8 442.7 L495.6 441.4 L498.3 441.6 L497.0 440.6 L498.3 440.1 L499.4 439.5 L500.9 439.4 L502.3 439.3 L504.1 439.3 L505.9 439.3 L507.4 439.2 L508.9 439.0 L511.0 439.0 L513.0 441.4 L512.6 442.9 L509.7 442.2 L508.8 442.8 L509.7 444.8 L508.9 445.2 L512.5 446.8 L513.8 447.4 L512.6 448.4 L512.0 450.4 L512.7 454.3 L509.9 455.2 L508.7 456.8 L509.0 458.7 L510.3 460.3 L509.6 461.1 L512.2 462.9 L514.0 466.0 L512.7 468.4 L513.7 469.8 L512.7 471.2 L513.6 473.1 L512.8 475.2 L510.4 472.7 L507.3 468.3 L505.6 464.5 L505.7 462.3 L505.6 459.1 L506.1 457.1 L505.6 454.5 L504.6 452.9 L502.9 455.2 L502.6 455.8 L500.4 456.9 L501.5 460.7 L501.2 461.4 L499.7 462.3 L498.2 462.6 L495.8 462.3 L493.1 463.6 L490.1 464.3 L488.6 467.6 L487.3 470.5 L486.7 474.5 L487.8 475.9 L490.0 474.7 L492.9 476.2 L493.9 478.2 L493.6 480.8 L494.8 485.3 L493.8 488.8 L493.3 491.3 L491.3 495.2 L489.6 498.4 L487.0 500.1 L484.4 499.4 L483.4 501.3 L482.2 503.4 L482.3 505.0 L479.0 507.6 L478.7 508.7 L480.7 510.1 L482.9 513.5 L483.3 516.7 L482.0 518.2 L480.2 519.1 L478.0 519.9 L477.8 517.2 L478.1 514.4 L477.5 512.7 L475.2 512.4 L475.2 510.4 L474.5 508.4 L473.2 507.5 L470.8 508.4 L468.1 510.5 L468.7 508.0 L469.5 506.4 L467.7 505.8 L465.0 508.1 L463.8 509.7 L461.7 510.6 L462.6 512.4 L463.8 513.8 L465.5 514.2 L467.3 512.8 L470.4 513.6 L470.2 514.7 L467.4 515.9 L465.4 518.0 L464.5 519.4 L466.6 521.0 L467.8 523.9 L469.6 526.4 L469.9 528.4 L468.0 529.8 L470.2 530.7 L469.7 533.7 L467.6 536.7 L465.8 539.7 L464.2 542.2 L462.4 543.4 L459.9 545.9 L457.1 547.2 L454.4 548.0 L452.9 548.2 L449.7 549.2 L447.2 549.7 L446.3 552.1 L445.0 551.8 L444.9 549.3 L442.2 548.6 L439.3 549.9 L438.3 551.4 L436.3 554.0 L437.7 556.6 L439.2 559.0 L441.5 560.9 L443.4 564.5 L443.7 568.2 L443.0 571.1 L440.2 571.9 L438.0 572.7 L437.6 574.5 L434.7 575.6 L433.7 575.9 L434.1 573.3 L432.9 572.1 L431.0 571.4 L429.8 568.7 L427.9 567.0 L425.9 566.2 L425.7 564.7 L423.9 564.4 L423.7 567.3 L422.0 570.3 L421.9 572.6 L423.5 574.5 L424.5 577.3 L427.1 578.5 L428.7 580.8 L430.7 583.4 L430.7 586.5 L432.3 589.5 L431.0 589.7 L428.2 587.4 L426.3 585.9 L424.8 583.6 L424.1 580.0 L422.9 577.8 L420.2 574.9 L420.1 572.4 L421.0 570.1 L420.9 566.8 L420.3 562.8 L419.7 559.7 L419.7 556.9 L418.0 555.5 L416.7 556.5 L414.8 557.4 L412.9 556.5 L413.8 553.2 L413.4 550.5 L412.5 547.8 L410.4 545.0 L410.0 541.5 L407.9 540.5 L406.9 541.8 L404.8 541.4 L403.0 541.1 L400.9 541.6 L400.4 543.6 L397.7 544.0 L395.1 545.8 L391.7 548.4 L389.8 549.2 L388.0 549.7 L387.6 553.4 L386.8 556.2 L386.4 559.3 L385.1 559.1 L385.0 560.9 L383.7 561.1 L382.5 562.1 L381.3 559.7 L380.6 555.7 L379.7 552.3 L379.3 548.6 L378.8 545.7 L378.3 542.8 L378.5 538.9 L378.7 536.1 L379.5 532.1 L379.6 530.3 L378.7 532.2 L377.1 531.6 L376.1 530.1 L375.5 527.0 L377.5 526.7 L375.8 525.3 L375.3 523.6 L374.9 520.9 L374.6 519.1 L372.3 517.7 L369.9 515.6 L368.7 514.0 L367.3 512.4 L366.4 510.4 L366.8 507.8 L365.3 506.9 L364.5 505.5 L364.4 503.3 L364.1 501.7 L364.8 498.6 L365.3 496.1 L364.8 495.0 L364.0 495.3 L363.1 497.8 L362.5 500.7 L362.4 502.8 L361.5 505.0 L361.4 507.2 L362.4 505.0 L362.2 506.7 L361.4 508.4 L362.1 510.1 L363.0 511.0 L365.1 509.5 L365.9 509.0 L364.9 512.2 L365.1 514.6 L365.9 516.0 L366.2 519.1 L364.6 521.3 L363.2 521.8 L362.4 524.2 L361.0 524.8 L359.5 525.3 L357.9 524.4 L357.1 525.1 L355.1 524.6 L353.8 524.7 L352.5 523.5 L352.0 522.1 L352.2 520.2 L352.6 516.9 L353.2 514.5 L353.6 510.9 L354.2 507.3 L354.9 502.7 L355.9 499.2 L356.7 495.6 L357.9 492.2 L359.5 487.4 L360.7 484.7 L359.4 486.5 L359.6 485.6 L361.2 482.0 L362.5 479.4 L362.4 480.9 L363.9 479.2 L366.2 476.4 L368.3 473.7 L368.2 472.5 L367.5 472.0 L368.2 469.7 L368.7 467.8 L369.7 465.9 L372.0 462.5 L373.2 461.5 L373.7 461.9 L373.6 463.4 L374.6 463.8 L374.6 465.1 L373.8 467.2 L373.6 468.9 L373.9 470.4 L374.9 470.2 L376.1 468.8 L377.5 465.4 L378.2 463.3 L379.2 461.5 L380.8 460.8 L382.2 460.0 L381.3 459.8 L379.3 460.2 L378.1 460.1 L379.2 458.3 L380.2 458.1 L381.1 455.9 L380.5 455.8 L379.1 456.7 L377.6 457.6 L375.7 459.3 L374.3 461.0 L373.9 461.8 L373.7 461.1 L373.2 461.1 L373.9 460.2 L374.3 459.0 L373.9 459.1 L374.2 458.5 L372.4 460.8 L371.0 462.7 L371.1 462.2 L369.6 464.1 L370.7 462.2 L372.5 459.8 L374.3 457.4 L376.1 455.3 L377.4 453.9 L379.8 450.9 L382.3 448.0 L383.7 446.6 L384.6 445.7 L384.7 445.4 L382.9 447.0 L381.7 448.3 L379.0 451.4 L378.4 452.1 L375.5 455.7 L376.5 454.3 L374.7 456.2 L374.3 456.7 L375.8 454.9 L376.8 453.6 L378.1 452.1 L380.3 449.6 L382.7 447.0 L384.3 445.5 L385.5 444.3 L385.6 444.1 L386.2 444.5 L387.9 442.9 L387.4 443.4 L390.6 440.6 L391.9 439.5 L394.6 437.3 L397.2 435.3 L400.1 433.3 L398.1 434.7 L399.2 433.9 L397.9 434.8 L398.1 433.9 L397.7 434.3 L398.6 433.8 L399.4 433.4 L398.7 434.1 L398.1 434.8 L400.1 433.6 L402.9 432.1 L402.9 432.3 L403.2 432.4 L401.5 433.3 L400.5 433.9 L399.7 434.1 L397.5 435.7 L397.2 436.1 L395.9 437.5 L396.0 438.1 L395.7 439.0 L394.8 439.9 L395.8 439.8 L398.8 438.0 L399.5 438.2 L398.5 439.3 L400.5 438.3 L402.0 437.1 L402.2 437.8 L402.2 438.8 L402.8 439.4 L403.7 438.2 L403.8 437.2 L403.3 436.3 L405.2 434.8 L408.2 433.3 L409.8 433.0 L412.1 432.8 L413.2 432.5 L413.9 431.6 L413.6 431.3 L411.8 431.7 L410.4 431.8 L408.5 432.0 L406.1 432.9 L404.4 434.3 L403.1 434.7 L402.4 434.5 L400.0 435.8 L398.7 436.3 L398.5 436.0 L398.7 435.5 L400.2 434.6 L402.9 432.9 L405.1 431.7 L406.1 431.0 L405.6 431.0 L404.9 431.1 L405.5 430.4 L407.1 429.4 L409.5 428.3 L412.1 427.2 L412.9 427.3 L413.5 427.5 L414.5 427.7 L416.5 427.5 L419.1 427.2 L420.5 427.3 L422.1 427.5 L422.7 428.2 L423.7 428.8 L423.2 429.7Z M362.5 479.4 L361.2 482.0 L359.6 485.6 L357.8 490.1 L356.3 494.8 L354.8 500.1 L353.4 504.8 L353.0 507.8 L352.0 513.1 L352.0 516.6 L351.8 522.2 L351.6 524.1 L351.9 527.6 L352.9 528.4 L353.9 530.2 L355.2 531.4 L354.7 533.8 L353.9 537.1 L353.1 539.9 L352.3 541.9 L351.8 543.2 L351.1 543.9 L350.9 544.9 L350.9 545.9 L352.0 548.2 L352.5 551.0 L353.2 554.0 L354.5 559.0 L355.5 562.4 L356.6 565.7 L357.3 567.7 L357.2 567.5 L357.8 569.1 L360.0 574.3 L358.9 571.9 L358.0 569.6 L356.7 566.2 L355.6 562.8 L354.6 559.5 L353.7 556.1 L352.9 552.7 L352.2 549.3 L351.6 545.8 L351.1 542.4 L350.7 539.0 L350.4 535.5 L350.3 532.1 L350.2 528.6 L350.2 525.2 L350.4 521.7 L350.6 518.3 L351.0 514.8 L351.4 511.4 L351.3 507.8 L352.0 504.3 L352.8 500.9 L353.8 497.4 L354.9 494.0 L356.2 490.7 L357.6 487.3 L359.2 484.0 L360.9 480.7 L362.7 477.5Z M357.9 570.9 L360.7 577.4 L362.6 579.9 L364.0 582.7 L365.6 585.4 L366.8 587.5 L366.3 586.6 L363.9 582.4 L362.3 579.2 L361.4 577.5 L359.7 573.7 L359.3 572.9 L358.3 572.2Z M492.9 473.9 L494.8 475.2 L496.3 478.0 L498.1 481.5 L500.2 483.7 L499.3 487.2 L500.8 489.5 L499.4 490.3 L497.9 487.5 L496.7 483.4 L494.8 479.5 L493.6 476.5Z M499.1 491.7 L501.7 493.6 L504.9 493.3 L506.0 495.1 L503.7 498.2 L500.9 497.9 L499.6 498.6 L499.1 500.8 L498.0 498.1 L498.5 496.8 L499.8 496.3 L499.3 493.3Z M500.4 500.7 L501.9 502.5 L503.1 504.7 L503.0 507.3 L502.6 509.2 L502.8 511.5 L503.3 513.2 L502.0 514.7 L500.5 515.4 L499.8 516.3 L497.2 517.0 L496.7 517.8 L495.9 519.8 L494.3 519.1 L494.0 517.5 L491.1 518.7 L489.0 519.7 L486.6 520.0 L486.3 519.1 L488.9 516.5 L491.9 515.6 L494.7 515.1 L495.3 513.4 L495.7 511.0 L497.1 511.9 L498.5 510.3 L499.7 507.8 L499.8 504.8 L499.2 502.6 L499.4 501.4Z M486.5 520.2 L488.0 520.7 L488.6 523.2 L488.0 525.8 L486.9 526.8 L485.9 526.3 L485.8 523.7 L484.6 523.0 L484.6 521.4Z M489.5 520.1 L491.6 518.6 L493.4 519.0 L492.7 520.7 L490.7 522.2 L489.5 521.4Z M469.6 541.2 L470.6 541.8 L469.7 545.0 L468.5 548.7 L467.2 547.4 L466.8 545.3 L468.0 542.8Z M442.6 554.0 L444.6 552.6 L447.3 552.8 L447.3 554.6 L445.3 556.4 L443.0 556.0Z M468.1 556.5 L471.5 556.6 L472.1 559.6 L470.4 562.3 L470.7 565.5 L473.6 566.5 L476.1 568.9 L474.9 566.6 L472.5 566.8 L469.6 567.1 L468.3 565.8 L468.9 564.7 L467.2 564.1 L466.7 561.6 L467.7 559.8Z M479.1 574.5 L481.2 576.4 L481.7 579.4 L480.9 581.3 L479.3 582.2 L479.3 580.6 L476.7 581.8 L476.2 579.7 L472.2 580.7 L471.7 579.1 L474.8 577.3 L477.7 577.1Z M476.5 569.1 L479.2 569.5 L479.5 572.0 L478.2 573.8 L477.3 571.6 L474.9 572.3 L474.3 575.5 L472.7 574.9 L471.6 573.3 L471.3 570.8 L473.7 571.1 L474.3 569.6Z M460.9 578.1 L462.7 576.4 L466.0 573.5 L465.5 572.1 L463.8 574.8 L461.1 576.8Z M442.9 590.5 L444.2 589.9 L448.0 589.2 L447.8 591.1 L451.7 588.1 L455.0 585.5 L457.2 584.0 L460.1 581.1 L461.9 582.1 L465.5 584.3 L463.3 585.8 L462.0 587.2 L462.5 590.6 L464.8 592.5 L462.1 593.8 L461.9 595.8 L459.7 597.6 L459.1 600.6 L455.8 601.5 L453.1 600.0 L449.2 600.0 L445.8 598.9 L445.3 596.4 L443.5 594.5 L443.0 592.0Z M413.9 578.2 L418.4 580.0 L420.8 583.2 L423.6 586.2 L427.0 588.3 L430.0 591.0 L431.8 594.0 L433.4 596.5 L436.7 598.2 L436.7 600.7 L436.6 603.1 L434.1 602.6 L430.5 599.9 L427.2 596.8 L424.9 593.8 L422.3 590.6 L420.9 587.4 L418.4 584.8 L416.0 582.0 L413.9 579.4Z M435.5 604.4 L437.5 603.3 L442.0 604.7 L446.8 605.7 L451.4 606.0 L455.6 607.7 L455.5 609.1 L450.2 608.4 L444.8 607.0 L440.5 606.4 L437.2 605.4Z M457.2 608.3 L460.0 608.6 L464.0 608.6 L465.7 608.9 L467.7 608.7 L473.8 608.3 L474.0 609.1 L468.8 609.4 L465.5 609.3 L461.2 609.7 L458.3 609.3Z M475.5 611.3 L477.5 609.6 L480.8 608.3 L483.4 607.7 L481.8 609.0 L478.6 610.6 L476.4 611.4Z M467.0 592.8 L469.2 591.8 L474.2 592.4 L478.6 590.8 L477.5 593.1 L471.9 593.4 L468.1 593.7 L467.5 595.8 L470.4 595.8 L474.2 595.7 L471.5 597.6 L473.1 599.8 L474.2 602.0 L472.0 602.6 L470.9 600.4 L469.6 599.1 L468.5 600.5 L468.5 603.9 L466.5 604.0 L466.5 600.6 L465.1 599.2 L466.4 596.1 L467.0 594.3Z M484.1 589.6 L485.3 591.3 L486.6 590.6 L485.3 592.4 L485.3 594.4 L484.4 592.3 L483.9 591.5Z M485.3 598.5 L488.5 597.8 L491.4 598.3 L488.5 599.0 L485.5 599.2Z M491.8 593.8 L495.1 592.6 L498.3 592.8 L498.7 595.6 L500.3 596.9 L504.2 594.3 L506.7 592.7 L510.3 593.3 L512.7 593.0 L517.6 593.3 L520.4 594.0 L522.2 595.2 L524.9 595.1 L524.2 596.7 L526.2 599.1 L529.4 600.1 L528.1 601.0 L524.1 601.6 L521.7 599.7 L519.0 599.6 L516.6 601.5 L514.9 603.2 L512.0 603.8 L509.1 603.0 L506.1 604.0 L507.7 601.6 L506.8 599.3 L502.3 598.7 L497.7 598.6 L495.6 598.9 L494.4 597.2 L497.4 595.8 L494.6 595.9 L491.8 594.9Z M526.7 593.9 L529.6 592.5 L532.4 590.6 L533.7 589.0 L533.2 591.0 L530.4 593.5 L527.7 594.3Z M514.6 605.6 L516.1 607.7 L515.8 610.1 L518.7 610.3 L519.2 613.3 L519.2 614.9 L522.5 615.2 L523.3 616.8 L524.8 617.4 L527.0 618.1 L526.5 619.9 L525.5 621.8 L523.4 624.0 L521.4 625.8 L518.8 627.6 L516.1 629.6 L514.5 630.9 L510.8 632.4 L508.5 633.6 L506.6 633.9 L504.6 634.8 L501.3 635.5 L500.1 635.1 L498.7 634.8 L498.6 633.9 L498.6 633.2 L497.1 634.2 L494.6 635.3 L492.7 634.5 L489.2 634.4 L484.1 634.8 L478.6 635.8 L475.0 636.7 L471.4 637.5 L467.9 637.6 L464.5 638.4 L461.0 638.2 L459.2 637.7 L460.0 636.3 L458.7 634.7 L457.0 633.0 L455.4 631.1 L455.3 629.1 L455.6 627.5 L457.8 626.5 L461.4 625.4 L465.8 624.8 L469.9 624.2 L472.6 622.2 L472.4 620.9 L475.3 621.0 L477.3 619.3 L480.1 617.1 L482.6 616.0 L485.1 617.0 L487.7 616.8 L489.0 614.4 L490.7 612.9 L494.3 611.9 L495.0 610.8 L499.4 611.2 L503.1 610.2 L501.2 612.7 L499.9 615.0 L502.7 615.6 L506.4 616.0 L509.1 616.2 L511.0 613.8 L512.1 610.9 L512.8 608.6Z M505.2 635.3 L507.4 634.7 L509.9 633.7 L508.8 634.4 L506.8 635.3 L505.0 636.0 L504.9 635.8Z M386.4 560.8 L388.4 564.1 L389.3 566.9 L388.4 568.4 L386.8 568.3 L386.0 566.0 L386.3 563.2Z M543.5 612.7 L543.0 612.3 L543.2 612.1 L544.1 611.2 L543.4 611.9 L541.3 613.8 L539.5 615.4 L537.5 617.0 L538.4 616.3 L538.9 615.9 L540.6 614.4 L541.9 613.2Z M427.0 435.8 L429.3 435.3 L432.9 434.5 L435.2 434.0 L437.6 433.4 L438.7 433.4 L439.8 433.5 L441.0 433.5 L441.4 434.1 L439.7 434.3 L438.0 434.6 L436.3 434.8 L434.4 435.1 L432.5 435.5 L428.5 437.3 L426.4 437.2Z M453.6 434.5 L455.1 433.4 L456.6 432.4 L456.9 433.4 L457.4 434.4 L456.1 435.3 L454.8 436.1 L454.1 435.3Z M473.1 439.5 L474.2 438.8 L475.1 438.1 L476.3 438.3 L477.5 438.4 L478.6 438.3 L479.8 438.3 L478.9 438.7 L478.1 439.1 L477.2 439.5 L476.0 439.9 L474.7 440.3Z M498.2 437.5 L498.1 436.3 L499.1 436.2 L499.2 437.2Z M512.0 439.0 L511.0 436.8 L512.0 436.0 L514.8 438.3 L515.6 437.3 L518.3 438.7 L519.7 441.0 L522.2 443.3 L524.5 443.1 L526.1 443.7 L526.3 442.8 L526.5 441.8 L529.3 444.7 L530.4 446.6 L531.3 448.5 L530.1 445.8 L529.4 444.2 L528.7 442.6 L526.1 439.6 L523.3 437.0 L524.0 436.3 L523.6 434.9 L523.5 434.1 L523.2 433.3 L523.9 432.9 L524.4 432.5 L525.9 432.4 L528.3 433.1 L529.9 433.3 L531.6 434.0 L532.1 434.0 L535.2 437.1 L533.2 435.7 L531.2 434.2 L529.2 432.8 L527.1 431.4 L524.2 429.7 L521.4 428.0 L518.5 426.4 L515.6 424.9 L512.7 423.6 L508.4 421.7 L504.3 420.1 L500.2 418.7 L496.5 417.6 L493.0 416.7 L491.6 415.7 L490.0 415.5 L489.9 415.8 L491.4 416.3 L492.8 416.8 L494.1 417.2 L495.4 417.8 L496.6 418.3 L496.9 418.8 L497.1 419.3 L497.9 419.9 L498.7 420.5 L499.7 421.0 L500.6 421.6 L501.5 422.2 L502.4 422.8 L502.8 423.4 L503.1 424.0 L503.4 424.6 L503.7 425.2 L504.1 425.9 L504.3 426.6 L504.3 427.1 L504.4 427.7 L504.3 428.2 L503.9 428.8 L503.5 429.4 L502.4 430.1 L504.2 431.9 L506.4 433.9 L506.4 435.0 L507.9 435.9 L510.2 436.0 L511.0 436.8Z"/></clipPath><filter id="bl" x="-20%" y="-20%" width="140%" height="140%"><feGaussianBlur stdDeviation="5"/></filter><filter id="bl2" x="-20%" y="-20%" width="140%" height="140%"><feGaussianBlur stdDeviation="3"/></filter><radialGradient id="og" cx="50%" cy="48%" r="52%"><stop offset="0" stop-color="#233363"/><stop offset=".6" stop-color="#1d2a54"/><stop offset="1" stop-color="#182247"/></radialGradient><radialGradient id="sh" cx="50%" cy="50%" r="50%"><stop offset="0" stop-color="#000" stop-opacity="0"/><stop offset=".8" stop-color="#000" stop-opacity="0"/><stop offset=".95" stop-color="#000010" stop-opacity=".08"/><stop offset="1" stop-color="#000010" stop-opacity=".28"/></radialGradient></defs><g clip-path="url(#gc)"><rect x="345" y="408" width="240" height="240" fill="url(#og)"/><g filter="url(#bl)"><ellipse cx="474.1" cy="530.3" rx="13.6" ry="13.7" fill="#34508a" opacity="0.80"/><ellipse cx="469.6" cy="516.8" rx="9.1" ry="9.0" fill="#34508a" opacity="0.70"/><ellipse cx="445.0" cy="574.2" rx="15.7" ry="14.9" fill="#2c4378" opacity="0.70"/><ellipse cx="441.1" cy="600.4" rx="13.2" ry="10.8" fill="#304a82" opacity="0.80"/><ellipse cx="499.7" cy="607.9" rx="12.6" ry="9.8" fill="#304a82" opacity="0.80"/><ellipse cx="478.4" cy="616.5" rx="10.9" ry="7.4" fill="#2b4277" opacity="0.60"/><ellipse cx="462.4" cy="553.3" rx="11.4" ry="11.2" fill="#2a4176" opacity="0.50"/><ellipse cx="499.2" cy="470.9" rx="13.1" ry="14.2" fill="#26396b" opacity="0.60"/><ellipse cx="459.2" cy="436.5" rx="20.6" ry="15.3" fill="#2a3c68" opacity="0.80"/><ellipse cx="423.5" cy="581.4" rx="6.4" ry="5.9" fill="#304a82" opacity="0.60"/><ellipse cx="404.7" cy="556.4" rx="16.4" ry="17.2" fill="#1f2f5a" opacity="0.50"/><ellipse cx="366.8" cy="544.1" rx="15.5" ry="20.1" fill="#1f2f5a" opacity="0.50"/><ellipse cx="463.4" cy="427.1" rx="7.2" ry="13.7" fill="#3a4d7a" opacity="0.85"/><ellipse cx="474.4" cy="432.5" rx="10.4" ry="13.4" fill="#34466f" opacity="0.70"/><ellipse cx="444.8" cy="429.8" rx="12.0" ry="16.4" fill="#34466f" opacity="0.70"/></g><g clip-path="url(#lc)"><rect x="345" y="408" width="240" height="240" fill="#3f4b36"/><g filter="url(#bl)"><ellipse cx="443.9" cy="461.0" rx="30.9" ry="24.1" fill="#364230" opacity="1.00"/><ellipse cx="418.9" cy="453.6" rx="21.8" ry="24.5" fill="#3a4632" opacity="1.00"/><ellipse cx="478.9" cy="457.4" rx="23.4" ry="20.0" fill="#364230" opacity="1.00"/><ellipse cx="501.7" cy="448.9" rx="13.5" ry="19.8" fill="#3c4838" opacity="1.00"/><ellipse cx="471.3" cy="475.4" rx="17.6" ry="15.4" fill="#384430" opacity="1.00"/><ellipse cx="419.6" cy="476.1" rx="11.9" ry="12.7" fill="#3e4a36" opacity="1.00"/><ellipse cx="393.0" cy="478.1" rx="14.2" ry="19.7" fill="#84775a" opacity="1.00"/><ellipse cx="383.0" cy="484.0" rx="10.0" ry="15.2" fill="#8f8262" opacity="1.00"/><ellipse cx="412.2" cy="491.9" rx="11.8" ry="13.2" fill="#857859" opacity="1.00"/><ellipse cx="413.1" cy="501.5" rx="14.2" ry="15.6" fill="#9a8c6a" opacity="1.00"/><ellipse cx="437.7" cy="499.7" rx="15.6" ry="15.3" fill="#8d8060" opacity="1.00"/><ellipse cx="430.6" cy="510.0" rx="10.9" ry="11.2" fill="#82765a" opacity="1.00"/><ellipse cx="452.6" cy="496.6" rx="9.1" ry="8.7" fill="#7a7256" opacity="1.00"/><ellipse cx="408.4" cy="516.6" rx="14.2" ry="15.7" fill="#80745a" opacity="1.00"/><ellipse cx="419.0" cy="524.0" rx="8.5" ry="9.1" fill="#6e6a50" opacity="1.00"/><ellipse cx="395.5" cy="507.1" rx="7.2" ry="8.9" fill="#7c735a" opacity="1.00"/><ellipse cx="369.9" cy="497.0" rx="10.5" ry="16.9" fill="#9c8e6c" opacity="1.00"/><ellipse cx="371.9" cy="510.2" rx="8.7" ry="12.7" fill="#94866a" opacity="1.00"/><ellipse cx="358.5" cy="504.0" rx="10.3" ry="17.8" fill="#b09e78" opacity="1.00"/><ellipse cx="361.7" cy="488.1" rx="6.2" ry="11.8" fill="#a89670" opacity="1.00"/><ellipse cx="353.3" cy="519.5" rx="5.6" ry="9.4" fill="#a08e6a" opacity="1.00"/><ellipse cx="381.9" cy="519.7" rx="8.3" ry="10.9" fill="#8a7c5e" opacity="1.00"/><ellipse cx="386.7" cy="536.4" rx="10.8" ry="12.9" fill="#60623f" opacity="1.00"/><ellipse cx="382.8" cy="550.0" rx="7.0" ry="8.3" fill="#52603a" opacity="1.00"/><ellipse cx="397.3" cy="533.9" rx="7.6" ry="8.8" fill="#55623c" opacity="1.00"/><ellipse cx="450.2" cy="534.9" rx="15.9" ry="16.0" fill="#3d5633" opacity="1.00"/><ellipse cx="451.0" cy="519.0" rx="11.4" ry="11.3" fill="#5c6444" opacity="1.00"/><ellipse cx="460.4" cy="514.7" rx="6.8" ry="6.8" fill="#58643f" opacity="1.00"/><ellipse cx="475.0" cy="496.3" rx="11.2" ry="10.8" fill="#3c4c32" opacity="1.00"/><ellipse cx="429.7" cy="542.0" rx="11.0" ry="11.3" fill="#3a5230" opacity="1.00"/><ellipse cx="428.4" cy="557.4" rx="13.2" ry="13.2" fill="#33502d" opacity="1.00"/><ellipse cx="436.4" cy="567.1" rx="8.9" ry="8.6" fill="#3a5530" opacity="1.00"/><ellipse cx="427.7" cy="584.1" rx="6.5" ry="5.9" fill="#2a4828" opacity="1.00"/><ellipse cx="427.9" cy="591.6" rx="10.8" ry="9.4" fill="#2a4828" opacity="1.00"/><ellipse cx="454.0" cy="592.4" rx="11.2" ry="9.6" fill="#27472a" opacity="1.00"/><ellipse cx="469.8" cy="597.8" rx="6.7" ry="5.5" fill="#2a4828" opacity="1.00"/><ellipse cx="510.5" cy="597.6" rx="12.2" ry="10.6" fill="#27452a" opacity="1.00"/><ellipse cx="445.8" cy="605.8" rx="8.8" ry="6.8" fill="#30492c" opacity="1.00"/><ellipse cx="473.7" cy="570.3" rx="11.3" ry="10.7" fill="#30492c" opacity="1.00"/><ellipse cx="493.1" cy="626.8" rx="24.3" ry="15.4" fill="#8a5a3e" opacity="1.00"/><ellipse cx="471.9" cy="626.9" rx="15.0" ry="8.7" fill="#8c5c3c" opacity="1.00"/><ellipse cx="504.9" cy="627.3" rx="11.8" ry="6.8" fill="#86603f" opacity="1.00"/><ellipse cx="492.9" cy="616.2" rx="10.6" ry="7.3" fill="#6a5a3a" opacity="1.00"/><ellipse cx="514.5" cy="611.6" rx="7.9" ry="5.9" fill="#54583a" opacity="1.00"/><ellipse cx="518.4" cy="626.7" rx="9.1" ry="5.6" fill="#4a5636" opacity="1.00"/><ellipse cx="518.2" cy="616.5" rx="5.8" ry="4.0" fill="#4a5636" opacity="1.00"/><ellipse cx="498.3" cy="513.6" rx="8.5" ry="9.0" fill="#3a5030" opacity="1.00"/><ellipse cx="350.2" cy="527.0" rx="8.7" ry="14.4" fill="#7a6a48" opacity="1.00"/><ellipse cx="354.0" cy="498.0" rx="8.1" ry="14.6" fill="#b09e78" opacity="1.00"/><ellipse cx="437.6" cy="433.4" rx="4.4" ry="6.1" fill="#aab0b4" opacity="0.60"/><ellipse cx="512.0" cy="437.3" rx="5.6" ry="12.9" fill="#4a5442" opacity="1.00"/><ellipse cx="452.6" cy="414.6" rx="12.8" ry="5.2" fill="#e8ecf0" opacity="1.00"/><ellipse cx="469.3" cy="416.4" rx="5.4" ry="2.4" fill="#c0c6cc" opacity="0.80"/><ellipse cx="455.8" cy="416.8" rx="6.5" ry="3.6" fill="#e8ecf0" opacity="1.00"/><ellipse cx="485.9" cy="415.3" rx="15.4" ry="8.8" fill="#8a8f88" opacity="1.00"/><ellipse cx="440.4" cy="423.7" rx="2.6" ry="6.2" fill="#d8dde2" opacity="0.90"/><ellipse cx="444.9" cy="428.7" rx="2.8" ry="5.1" fill="#d8dde2" opacity="0.90"/><ellipse cx="429.5" cy="418.5" rx="4.8" ry="3.7" fill="#7a8078" opacity="1.00"/><ellipse cx="391.1" cy="440.1" rx="10.2" ry="17.7" fill="#3e5034" opacity="1.00"/><ellipse cx="410.5" cy="430.4" rx="5.8" ry="11.4" fill="#3a4a34" opacity="1.00"/><ellipse cx="508.2" cy="421.5" rx="12.7" ry="12.1" fill="#3a4834" opacity="1.00"/><ellipse cx="526.5" cy="430.3" rx="7.0" ry="7.8" fill="#36482f" opacity="1.00"/></g></g><path d="M380.4 469.4 L378.7 472.3 L377.4 474.8 L376.3 477.5 L374.2 480.1 L372.7 481.9 L372.6 484.0 L373.0 485.9 L374.3 486.9 L376.1 484.4 L376.7 481.9 L378.5 479.3 L379.9 477.0 L380.7 474.4 L382.0 472.0 L384.1 472.0 L386.2 469.5 L385.5 468.0 L383.9 467.5 L382.1 468.0Z M388.3 474.2 L390.5 474.7 L389.7 476.9 L386.4 479.0 L385.7 477.7Z M442.6 481.6 L445.1 481.0 L449.0 477.7 L451.9 474.0 L451.3 473.8 L448.0 478.2 L444.5 480.6Z M400.3 484.3 L403.8 482.1 L407.0 484.2 L403.7 483.5Z" fill="#1d2c5c" stroke="#c8c800" stroke-width=".8"/><path d="M468.3 415.4 L467.6 414.8 L466.8 414.4 L465.8 414.3 L464.8 414.3 L463.8 414.3 L462.8 414.3 L461.8 413.7 L460.5 413.2 L459.1 412.9 L457.5 412.9 L455.7 413.0 L456.7 413.5 L453.1 413.8 L450.4 414.1 L447.6 414.5 L446.3 414.7 L445.7 414.1 L444.6 414.3 L443.6 414.6 L442.8 414.9 L442.0 415.1 L441.0 415.5 L440.1 415.8 L439.3 416.1 L438.5 416.5 L437.8 416.9 L440.2 416.8 L441.1 417.3 L442.2 417.7 L446.5 418.0 L448.7 418.7 L449.1 419.2 L449.7 419.7 L450.6 419.5 L451.5 419.4 L452.4 419.3 L453.3 419.3 L454.1 419.3 L454.9 419.3 L455.4 419.2 L455.9 419.1 L456.3 419.0 L456.8 418.9 L457.3 418.9 L457.6 418.7 L458.0 418.5 L458.4 418.3 L458.8 418.1 L459.2 418.0 L459.7 417.8 L460.2 417.7 L460.7 417.6 L461.3 417.5 L461.8 417.4 L462.4 417.3 L462.9 417.2 L463.5 417.0 L464.2 416.8 L464.9 416.6 L465.6 416.4 L466.9 415.8Z M476.8 415.8 L476.0 415.6 L475.1 415.4 L474.3 415.2 L473.4 415.1 L472.5 414.9 L470.8 415.3 L469.3 415.5 L468.0 415.7 L467.0 415.9 L466.1 416.1 L465.3 416.4 L464.5 416.6 L463.5 417.5 L464.0 417.6 L464.5 417.7 L465.0 417.8 L465.5 417.9 L466.1 417.9 L466.6 417.9 L467.2 417.9 L467.8 417.9 L468.4 417.9 L469.0 417.9 L469.6 418.0 L470.6 417.9 L471.6 417.8 L472.6 417.7 L473.2 417.1 L473.6 416.5Z M496.7 421.2 L495.5 420.7 L494.4 420.2 L493.2 419.8 L492.0 419.3 L490.8 418.9 L490.2 418.5 L489.6 418.1 L489.0 417.8 L488.2 417.4 L487.5 417.1 L484.8 416.8 L482.1 416.6 L481.9 416.2 L481.6 415.7 L480.7 415.4 L479.7 415.2 L478.6 414.9 L477.6 414.7 L476.5 414.5 L475.3 414.3 L474.5 414.0 L473.5 413.8 L472.6 413.6 L471.6 413.4 L470.5 413.2 L469.5 413.0 L468.3 412.8 L467.0 412.7 L465.6 412.6 L464.1 412.5 L466.1 413.2 L467.9 413.2 L469.8 413.3 L471.6 413.4 L473.3 413.5 L475.0 413.6 L476.6 413.8 L478.2 414.0 L476.0 413.7 L474.0 412.9 L475.4 413.0 L476.7 413.2 L477.8 413.4 L478.8 413.7 L479.7 414.0 L480.7 414.2 L481.7 414.5 L482.6 414.8 L483.5 415.1 L484.3 415.4 L485.9 415.7 L487.4 416.0 L489.0 416.3 L490.6 416.7 L492.2 417.1 L493.1 417.5 L494.0 417.9 L494.8 418.3 L495.6 418.8 L496.3 419.2 L497.0 419.7 L497.7 420.1 L498.3 420.6 L498.8 421.1 L499.3 421.6Z M434.1 416.9 L433.7 417.2 L432.3 417.7 L430.9 418.2 L428.6 419.1 L426.7 419.7 L427.0 419.3 L428.3 418.7 L431.3 417.6Z M441.2 422.5 L441.9 422.9 L442.6 423.2 L442.7 423.4 L442.9 423.7 L443.0 424.0 L442.5 424.4 L442.0 424.9 L440.3 424.7 L438.7 424.6 L437.3 424.4 L435.9 424.1 L437.9 423.3Z M443.8 427.5 L444.4 427.7 L444.9 427.8 L445.5 428.0 L446.0 428.1 L446.5 428.3 L447.0 428.4 L447.6 428.6 L447.4 429.2 L447.2 429.7 L446.3 429.7 L445.4 429.6 L444.5 429.5 L444.1 429.3 L443.7 429.0 L443.4 428.7 L443.1 428.5 L443.4 428.0Z M402.7 431.5 L401.5 432.4 L400.3 433.1 L398.8 433.3 L398.8 433.4 L400.5 432.3 L401.8 431.4 L403.9 430.2 L406.6 428.5 L409.5 427.0 L411.8 425.8 L412.6 425.3 L411.2 425.9 L408.0 427.6 L406.7 428.4 L404.6 429.6 L405.5 429.0 L404.3 430.6 L404.6 430.4 L402.6 431.6Z M421.6 430.8 L420.4 432.2 L419.3 433.3 L418.3 434.5 L417.3 435.7 L416.4 437.0 L414.3 437.6 L415.1 438.1 L415.9 438.5 L419.7 436.5 L419.3 437.6 L419.0 438.7 L420.0 439.0 L421.1 439.4 L422.1 439.7 L423.1 440.1 L424.1 440.5 L425.1 440.9 L427.2 440.0 L427.3 441.3 L427.6 442.6 L431.3 440.4 L434.4 438.9 L435.4 439.1 L436.5 439.3 L433.2 442.4 L430.0 444.9 L429.4 446.7 L432.1 444.8 L434.5 441.9 L437.2 440.2 L438.2 441.2 L441.1 439.9 L442.8 439.6 L444.5 439.2 L446.1 438.9 L448.2 438.4 L449.6 438.4 L450.9 438.4 L452.3 438.3 L453.7 438.1 L455.1 437.4 L456.4 436.7 L457.4 437.8 L458.2 438.3 L459.1 438.8 L460.1 439.3 L460.0 442.2 L458.6 442.3 L457.2 442.4 L458.4 442.7 L459.5 442.9 L461.1 443.1 L462.7 443.1 L463.9 443.0 L465.2 442.9 L466.4 442.7 L468.6 444.1 L470.8 446.4 L473.0 445.4 L474.4 445.3 L475.8 445.1 L476.8 443.0 L478.1 442.9 L479.4 442.8 L480.7 442.7 L482.2 442.9 L483.8 443.1 L485.7 443.6 L486.8 443.2 L488.0 442.8 L489.1 442.4 L491.5 443.3 L492.5 443.9 L493.7 443.3 L494.8 442.7 L495.6 441.4 L498.3 441.6 L497.0 440.6 L498.3 440.1 L499.4 439.5 L500.9 439.4 L502.3 439.3 L504.1 439.3 L505.9 439.3 L507.4 439.2 L508.9 439.0 L511.0 439.0 L513.0 441.4 L512.6 442.9 L509.7 442.2 L508.8 442.8 L509.7 444.8 L508.9 445.2 L512.5 446.8 L513.8 447.4 L512.6 448.4 L512.0 450.4 L512.7 454.3 L509.9 455.2 L508.7 456.8 L509.0 458.7 L510.3 460.3 L509.6 461.1 L512.2 462.9 L514.0 466.0 L512.7 468.4 L513.7 469.8 L512.7 471.2 L513.6 473.1 L512.8 475.2 L510.4 472.7 L507.3 468.3 L505.6 464.5 L505.7 462.3 L505.6 459.1 L506.1 457.1 L505.6 454.5 L504.6 452.9 L502.9 455.2 L502.6 455.8 L500.4 456.9 L501.5 460.7 L501.2 461.4 L499.7 462.3 L498.2 462.6 L495.8 462.3 L493.1 463.6 L490.1 464.3 L488.6 467.6 L487.3 470.5 L486.7 474.5 L487.8 475.9 L490.0 474.7 L492.9 476.2 L493.9 478.2 L493.6 480.8 L494.8 485.3 L493.8 488.8 L493.3 491.3 L491.3 495.2 L489.6 498.4 L487.0 500.1 L484.4 499.4 L483.4 501.3 L482.2 503.4 L482.3 505.0 L479.0 507.6 L478.7 508.7 L480.7 510.1 L482.9 513.5 L483.3 516.7 L482.0 518.2 L480.2 519.1 L478.0 519.9 L477.8 517.2 L478.1 514.4 L477.5 512.7 L475.2 512.4 L475.2 510.4 L474.5 508.4 L473.2 507.5 L470.8 508.4 L468.1 510.5 L468.7 508.0 L469.5 506.4 L467.7 505.8 L465.0 508.1 L463.8 509.7 L461.7 510.6 L462.6 512.4 L463.8 513.8 L465.5 514.2 L467.3 512.8 L470.4 513.6 L470.2 514.7 L467.4 515.9 L465.4 518.0 L464.5 519.4 L466.6 521.0 L467.8 523.9 L469.6 526.4 L469.9 528.4 L468.0 529.8 L470.2 530.7 L469.7 533.7 L467.6 536.7 L465.8 539.7 L464.2 542.2 L462.4 543.4 L459.9 545.9 L457.1 547.2 L454.4 548.0 L452.9 548.2 L449.7 549.2 L447.2 549.7 L446.3 552.1 L445.0 551.8 L444.9 549.3 L442.2 548.6 L439.3 549.9 L438.3 551.4 L436.3 554.0 L437.7 556.6 L439.2 559.0 L441.5 560.9 L443.4 564.5 L443.7 568.2 L443.0 571.1 L440.2 571.9 L438.0 572.7 L437.6 574.5 L434.7 575.6 L433.7 575.9 L434.1 573.3 L432.9 572.1 L431.0 571.4 L429.8 568.7 L427.9 567.0 L425.9 566.2 L425.7 564.7 L423.9 564.4 L423.7 567.3 L422.0 570.3 L421.9 572.6 L423.5 574.5 L424.5 577.3 L427.1 578.5 L428.7 580.8 L430.7 583.4 L430.7 586.5 L432.3 589.5 L431.0 589.7 L428.2 587.4 L426.3 585.9 L424.8 583.6 L424.1 580.0 L422.9 577.8 L420.2 574.9 L420.1 572.4 L421.0 570.1 L420.9 566.8 L420.3 562.8 L419.7 559.7 L419.7 556.9 L418.0 555.5 L416.7 556.5 L414.8 557.4 L412.9 556.5 L413.8 553.2 L413.4 550.5 L412.5 547.8 L410.4 545.0 L410.0 541.5 L407.9 540.5 L406.9 541.8 L404.8 541.4 L403.0 541.1 L400.9 541.6 L400.4 543.6 L397.7 544.0 L395.1 545.8 L391.7 548.4 L389.8 549.2 L388.0 549.7 L387.6 553.4 L386.8 556.2 L386.4 559.3 L385.1 559.1 L385.0 560.9 L383.7 561.1 L382.5 562.1 L381.3 559.7 L380.6 555.7 L379.7 552.3 L379.3 548.6 L378.8 545.7 L378.3 542.8 L378.5 538.9 L378.7 536.1 L379.5 532.1 L379.6 530.3 L378.7 532.2 L377.1 531.6 L376.1 530.1 L375.5 527.0 L377.5 526.7 L375.8 525.3 L375.3 523.6 L374.9 520.9 L374.6 519.1 L372.3 517.7 L369.9 515.6 L368.7 514.0 L367.3 512.4 L366.4 510.4 L366.8 507.8 L365.3 506.9 L364.5 505.5 L364.4 503.3 L364.1 501.7 L364.8 498.6 L365.3 496.1 L364.8 495.0 L364.0 495.3 L363.1 497.8 L362.5 500.7 L362.4 502.8 L361.5 505.0 L361.4 507.2 L362.4 505.0 L362.2 506.7 L361.4 508.4 L362.1 510.1 L363.0 511.0 L365.1 509.5 L365.9 509.0 L364.9 512.2 L365.1 514.6 L365.9 516.0 L366.2 519.1 L364.6 521.3 L363.2 521.8 L362.4 524.2 L361.0 524.8 L359.5 525.3 L357.9 524.4 L357.1 525.1 L355.1 524.6 L353.8 524.7 L352.5 523.5 L352.0 522.1 L352.2 520.2 L352.6 516.9 L353.2 514.5 L353.6 510.9 L354.2 507.3 L354.9 502.7 L355.9 499.2 L356.7 495.6 L357.9 492.2 L359.5 487.4 L360.7 484.7 L359.4 486.5 L359.6 485.6 L361.2 482.0 L362.5 479.4 L362.4 480.9 L363.9 479.2 L366.2 476.4 L368.3 473.7 L368.2 472.5 L367.5 472.0 L368.2 469.7 L368.7 467.8 L369.7 465.9 L372.0 462.5 L373.2 461.5 L373.7 461.9 L373.6 463.4 L374.6 463.8 L374.6 465.1 L373.8 467.2 L373.6 468.9 L373.9 470.4 L374.9 470.2 L376.1 468.8 L377.5 465.4 L378.2 463.3 L379.2 461.5 L380.8 460.8 L382.2 460.0 L381.3 459.8 L379.3 460.2 L378.1 460.1 L379.2 458.3 L380.2 458.1 L381.1 455.9 L380.5 455.8 L379.1 456.7 L377.6 457.6 L375.7 459.3 L374.3 461.0 L373.9 461.8 L373.7 461.1 L373.2 461.1 L373.9 460.2 L374.3 459.0 L373.9 459.1 L374.2 458.5 L372.4 460.8 L371.0 462.7 L371.1 462.2 L369.6 464.1 L370.7 462.2 L372.5 459.8 L374.3 457.4 L376.1 455.3 L377.4 453.9 L379.8 450.9 L382.3 448.0 L383.7 446.6 L384.6 445.7 L384.7 445.4 L382.9 447.0 L381.7 448.3 L379.0 451.4 L378.4 452.1 L375.5 455.7 L376.5 454.3 L374.7 456.2 L374.3 456.7 L375.8 454.9 L376.8 453.6 L378.1 452.1 L380.3 449.6 L382.7 447.0 L384.3 445.5 L385.5 444.3 L385.6 444.1 L386.2 444.5 L387.9 442.9 L387.4 443.4 L390.6 440.6 L391.9 439.5 L394.6 437.3 L397.2 435.3 L400.1 433.3 L398.1 434.7 L399.2 433.9 L397.9 434.8 L398.1 433.9 L397.7 434.3 L398.6 433.8 L399.4 433.4 L398.7 434.1 L398.1 434.8 L400.1 433.6 L402.9 432.1 L402.9 432.3 L403.2 432.4 L401.5 433.3 L400.5 433.9 L399.7 434.1 L397.5 435.7 L397.2 436.1 L395.9 437.5 L396.0 438.1 L395.7 439.0 L394.8 439.9 L395.8 439.8 L398.8 438.0 L399.5 438.2 L398.5 439.3 L400.5 438.3 L402.0 437.1 L402.2 437.8 L402.2 438.8 L402.8 439.4 L403.7 438.2 L403.8 437.2 L403.3 436.3 L405.2 434.8 L408.2 433.3 L409.8 433.0 L412.1 432.8 L413.2 432.5 L413.9 431.6 L413.6 431.3 L411.8 431.7 L410.4 431.8 L408.5 432.0 L406.1 432.9 L404.4 434.3 L403.1 434.7 L402.4 434.5 L400.0 435.8 L398.7 436.3 L398.5 436.0 L398.7 435.5 L400.2 434.6 L402.9 432.9 L405.1 431.7 L406.1 431.0 L405.6 431.0 L404.9 431.1 L405.5 430.4 L407.1 429.4 L409.5 428.3 L412.1 427.2 L412.9 427.3 L413.5 427.5 L414.5 427.7 L416.5 427.5 L419.1 427.2 L420.5 427.3 L422.1 427.5 L422.7 428.2 L423.7 428.8 L423.2 429.7Z M362.5 479.4 L361.2 482.0 L359.6 485.6 L357.8 490.1 L356.3 494.8 L354.8 500.1 L353.4 504.8 L353.0 507.8 L352.0 513.1 L352.0 516.6 L351.8 522.2 L351.6 524.1 L351.9 527.6 L352.9 528.4 L353.9 530.2 L355.2 531.4 L354.7 533.8 L353.9 537.1 L353.1 539.9 L352.3 541.9 L351.8 543.2 L351.1 543.9 L350.9 544.9 L350.9 545.9 L352.0 548.2 L352.5 551.0 L353.2 554.0 L354.5 559.0 L355.5 562.4 L356.6 565.7 L357.3 567.7 L357.2 567.5 L357.8 569.1 L360.0 574.3 L358.9 571.9 L358.0 569.6 L356.7 566.2 L355.6 562.8 L354.6 559.5 L353.7 556.1 L352.9 552.7 L352.2 549.3 L351.6 545.8 L351.1 542.4 L350.7 539.0 L350.4 535.5 L350.3 532.1 L350.2 528.6 L350.2 525.2 L350.4 521.7 L350.6 518.3 L351.0 514.8 L351.4 511.4 L351.3 507.8 L352.0 504.3 L352.8 500.9 L353.8 497.4 L354.9 494.0 L356.2 490.7 L357.6 487.3 L359.2 484.0 L360.9 480.7 L362.7 477.5Z M357.9 570.9 L360.7 577.4 L362.6 579.9 L364.0 582.7 L365.6 585.4 L366.8 587.5 L366.3 586.6 L363.9 582.4 L362.3 579.2 L361.4 577.5 L359.7 573.7 L359.3 572.9 L358.3 572.2Z M492.9 473.9 L494.8 475.2 L496.3 478.0 L498.1 481.5 L500.2 483.7 L499.3 487.2 L500.8 489.5 L499.4 490.3 L497.9 487.5 L496.7 483.4 L494.8 479.5 L493.6 476.5Z M499.1 491.7 L501.7 493.6 L504.9 493.3 L506.0 495.1 L503.7 498.2 L500.9 497.9 L499.6 498.6 L499.1 500.8 L498.0 498.1 L498.5 496.8 L499.8 496.3 L499.3 493.3Z M500.4 500.7 L501.9 502.5 L503.1 504.7 L503.0 507.3 L502.6 509.2 L502.8 511.5 L503.3 513.2 L502.0 514.7 L500.5 515.4 L499.8 516.3 L497.2 517.0 L496.7 517.8 L495.9 519.8 L494.3 519.1 L494.0 517.5 L491.1 518.7 L489.0 519.7 L486.6 520.0 L486.3 519.1 L488.9 516.5 L491.9 515.6 L494.7 515.1 L495.3 513.4 L495.7 511.0 L497.1 511.9 L498.5 510.3 L499.7 507.8 L499.8 504.8 L499.2 502.6 L499.4 501.4Z M486.5 520.2 L488.0 520.7 L488.6 523.2 L488.0 525.8 L486.9 526.8 L485.9 526.3 L485.8 523.7 L484.6 523.0 L484.6 521.4Z M489.5 520.1 L491.6 518.6 L493.4 519.0 L492.7 520.7 L490.7 522.2 L489.5 521.4Z M469.6 541.2 L470.6 541.8 L469.7 545.0 L468.5 548.7 L467.2 547.4 L466.8 545.3 L468.0 542.8Z M442.6 554.0 L444.6 552.6 L447.3 552.8 L447.3 554.6 L445.3 556.4 L443.0 556.0Z M468.1 556.5 L471.5 556.6 L472.1 559.6 L470.4 562.3 L470.7 565.5 L473.6 566.5 L476.1 568.9 L474.9 566.6 L472.5 566.8 L469.6 567.1 L468.3 565.8 L468.9 564.7 L467.2 564.1 L466.7 561.6 L467.7 559.8Z M479.1 574.5 L481.2 576.4 L481.7 579.4 L480.9 581.3 L479.3 582.2 L479.3 580.6 L476.7 581.8 L476.2 579.7 L472.2 580.7 L471.7 579.1 L474.8 577.3 L477.7 577.1Z M476.5 569.1 L479.2 569.5 L479.5 572.0 L478.2 573.8 L477.3 571.6 L474.9 572.3 L474.3 575.5 L472.7 574.9 L471.6 573.3 L471.3 570.8 L473.7 571.1 L474.3 569.6Z M460.9 578.1 L462.7 576.4 L466.0 573.5 L465.5 572.1 L463.8 574.8 L461.1 576.8Z M442.9 590.5 L444.2 589.9 L448.0 589.2 L447.8 591.1 L451.7 588.1 L455.0 585.5 L457.2 584.0 L460.1 581.1 L461.9 582.1 L465.5 584.3 L463.3 585.8 L462.0 587.2 L462.5 590.6 L464.8 592.5 L462.1 593.8 L461.9 595.8 L459.7 597.6 L459.1 600.6 L455.8 601.5 L453.1 600.0 L449.2 600.0 L445.8 598.9 L445.3 596.4 L443.5 594.5 L443.0 592.0Z M413.9 578.2 L418.4 580.0 L420.8 583.2 L423.6 586.2 L427.0 588.3 L430.0 591.0 L431.8 594.0 L433.4 596.5 L436.7 598.2 L436.7 600.7 L436.6 603.1 L434.1 602.6 L430.5 599.9 L427.2 596.8 L424.9 593.8 L422.3 590.6 L420.9 587.4 L418.4 584.8 L416.0 582.0 L413.9 579.4Z M435.5 604.4 L437.5 603.3 L442.0 604.7 L446.8 605.7 L451.4 606.0 L455.6 607.7 L455.5 609.1 L450.2 608.4 L444.8 607.0 L440.5 606.4 L437.2 605.4Z M457.2 608.3 L460.0 608.6 L464.0 608.6 L465.7 608.9 L467.7 608.7 L473.8 608.3 L474.0 609.1 L468.8 609.4 L465.5 609.3 L461.2 609.7 L458.3 609.3Z M475.5 611.3 L477.5 609.6 L480.8 608.3 L483.4 607.7 L481.8 609.0 L478.6 610.6 L476.4 611.4Z M467.0 592.8 L469.2 591.8 L474.2 592.4 L478.6 590.8 L477.5 593.1 L471.9 593.4 L468.1 593.7 L467.5 595.8 L470.4 595.8 L474.2 595.7 L471.5 597.6 L473.1 599.8 L474.2 602.0 L472.0 602.6 L470.9 600.4 L469.6 599.1 L468.5 600.5 L468.5 603.9 L466.5 604.0 L466.5 600.6 L465.1 599.2 L466.4 596.1 L467.0 594.3Z M484.1 589.6 L485.3 591.3 L486.6 590.6 L485.3 592.4 L485.3 594.4 L484.4 592.3 L483.9 591.5Z M485.3 598.5 L488.5 597.8 L491.4 598.3 L488.5 599.0 L485.5 599.2Z M491.8 593.8 L495.1 592.6 L498.3 592.8 L498.7 595.6 L500.3 596.9 L504.2 594.3 L506.7 592.7 L510.3 593.3 L512.7 593.0 L517.6 593.3 L520.4 594.0 L522.2 595.2 L524.9 595.1 L524.2 596.7 L526.2 599.1 L529.4 600.1 L528.1 601.0 L524.1 601.6 L521.7 599.7 L519.0 599.6 L516.6 601.5 L514.9 603.2 L512.0 603.8 L509.1 603.0 L506.1 604.0 L507.7 601.6 L506.8 599.3 L502.3 598.7 L497.7 598.6 L495.6 598.9 L494.4 597.2 L497.4 595.8 L494.6 595.9 L491.8 594.9Z M526.7 593.9 L529.6 592.5 L532.4 590.6 L533.7 589.0 L533.2 591.0 L530.4 593.5 L527.7 594.3Z M514.6 605.6 L516.1 607.7 L515.8 610.1 L518.7 610.3 L519.2 613.3 L519.2 614.9 L522.5 615.2 L523.3 616.8 L524.8 617.4 L527.0 618.1 L526.5 619.9 L525.5 621.8 L523.4 624.0 L521.4 625.8 L518.8 627.6 L516.1 629.6 L514.5 630.9 L510.8 632.4 L508.5 633.6 L506.6 633.9 L504.6 634.8 L501.3 635.5 L500.1 635.1 L498.7 634.8 L498.6 633.9 L498.6 633.2 L497.1 634.2 L494.6 635.3 L492.7 634.5 L489.2 634.4 L484.1 634.8 L478.6 635.8 L475.0 636.7 L471.4 637.5 L467.9 637.6 L464.5 638.4 L461.0 638.2 L459.2 637.7 L460.0 636.3 L458.7 634.7 L457.0 633.0 L455.4 631.1 L455.3 629.1 L455.6 627.5 L457.8 626.5 L461.4 625.4 L465.8 624.8 L469.9 624.2 L472.6 622.2 L472.4 620.9 L475.3 621.0 L477.3 619.3 L480.1 617.1 L482.6 616.0 L485.1 617.0 L487.7 616.8 L489.0 614.4 L490.7 612.9 L494.3 611.9 L495.0 610.8 L499.4 611.2 L503.1 610.2 L501.2 612.7 L499.9 615.0 L502.7 615.6 L506.4 616.0 L509.1 616.2 L511.0 613.8 L512.1 610.9 L512.8 608.6Z M505.2 635.3 L507.4 634.7 L509.9 633.7 L508.8 634.4 L506.8 635.3 L505.0 636.0 L504.9 635.8Z M386.4 560.8 L388.4 564.1 L389.3 566.9 L388.4 568.4 L386.8 568.3 L386.0 566.0 L386.3 563.2Z M543.5 612.7 L543.0 612.3 L543.2 612.1 L544.1 611.2 L543.4 611.9 L541.3 613.8 L539.5 615.4 L537.5 617.0 L538.4 616.3 L538.9 615.9 L540.6 614.4 L541.9 613.2Z M427.0 435.8 L429.3 435.3 L432.9 434.5 L435.2 434.0 L437.6 433.4 L438.7 433.4 L439.8 433.5 L441.0 433.5 L441.4 434.1 L439.7 434.3 L438.0 434.6 L436.3 434.8 L434.4 435.1 L432.5 435.5 L428.5 437.3 L426.4 437.2Z M453.6 434.5 L455.1 433.4 L456.6 432.4 L456.9 433.4 L457.4 434.4 L456.1 435.3 L454.8 436.1 L454.1 435.3Z M473.1 439.5 L474.2 438.8 L475.1 438.1 L476.3 438.3 L477.5 438.4 L478.6 438.3 L479.8 438.3 L478.9 438.7 L478.1 439.1 L477.2 439.5 L476.0 439.9 L474.7 440.3Z M498.2 437.5 L498.1 436.3 L499.1 436.2 L499.2 437.2Z M512.0 439.0 L511.0 436.8 L512.0 436.0 L514.8 438.3 L515.6 437.3 L518.3 438.7 L519.7 441.0 L522.2 443.3 L524.5 443.1 L526.1 443.7 L526.3 442.8 L526.5 441.8 L529.3 444.7 L530.4 446.6 L531.3 448.5 L530.1 445.8 L529.4 444.2 L528.7 442.6 L526.1 439.6 L523.3 437.0 L524.0 436.3 L523.6 434.9 L523.5 434.1 L523.2 433.3 L523.9 432.9 L524.4 432.5 L525.9 432.4 L528.3 433.1 L529.9 433.3 L531.6 434.0 L532.1 434.0 L535.2 437.1 L533.2 435.7 L531.2 434.2 L529.2 432.8 L527.1 431.4 L524.2 429.7 L521.4 428.0 L518.5 426.4 L515.6 424.9 L512.7 423.6 L508.4 421.7 L504.3 420.1 L500.2 418.7 L496.5 417.6 L493.0 416.7 L491.6 415.7 L490.0 415.5 L489.9 415.8 L491.4 416.3 L492.8 416.8 L494.1 417.2 L495.4 417.8 L496.6 418.3 L496.9 418.8 L497.1 419.3 L497.9 419.9 L498.7 420.5 L499.7 421.0 L500.6 421.6 L501.5 422.2 L502.4 422.8 L502.8 423.4 L503.1 424.0 L503.4 424.6 L503.7 425.2 L504.1 425.9 L504.3 426.6 L504.3 427.1 L504.4 427.7 L504.3 428.2 L503.9 428.8 L503.5 429.4 L502.4 430.1 L504.2 431.9 L506.4 433.9 L506.4 435.0 L507.9 435.9 L510.2 436.0 L511.0 436.8Z" fill="none" stroke="#d8d800" stroke-width="1.15" stroke-linejoin="round"/><path d="M383.9 467.5 L385.3 463.9 L387.4 461.3 L389.6 461.0 L392.1 460.9 L393.0 463.7 L394.4 465.0 L396.2 466.7 L400.0 464.2 L401.8 462.8 L403.5 463.3 L405.2 463.9 L408.6 463.9 L408.6 466.6 L410.5 468.0 L413.5 468.7 L413.5 471.0 L413.1 476.1 L416.4 477.2 L417.8 480.9 L419.6 482.3 L421.3 482.1 L423.8 481.2 L427.4 480.8 L430.0 483.1 L434.2 482.8 L435.6 479.8 L440.1 481.7 L440.9 484.2 L445.8 484.7 L448.3 487.0 L452.0 487.1 L456.5 485.5 L460.3 486.5 L461.9 487.1 L464.0 485.8 L466.1 481.0 L465.3 479.3 L469.7 478.5 L473.2 479.8 L476.0 485.0 L480.8 487.5 L481.9 489.8 L486.7 487.6 L487.5 489.4 L486.3 494.7 L483.5 495.9 L483.9 499.0 L483.4 501.3  M420.2 482.5 L420.3 484.5 L422.2 486.8 L421.4 491.1 L424.5 493.0 L426.8 495.3 L427.4 498.8 L432.8 499.9 L435.7 501.3 L438.8 502.6 L440.4 503.2 L444.7 501.8 L448.9 501.5 L452.0 499.4 L452.4 496.6 L455.8 496.7 L458.6 495.7 L459.4 493.7 L463.8 493.1 L465.0 492.4 L463.0 490.5 L461.9 490.3 L459.2 490.5 L458.9 489.2 L460.3 486.5  M419.6 482.3 L417.0 483.3 L415.4 486.1 L412.6 484.7 L410.1 487.8 L406.9 487.7 L405.6 492.0 L404.5 493.4 L399.5 494.2 L395.3 494.2 L394.1 495.4 L393.4 500.5  M404.5 493.4 L402.3 491.6 L400.3 489.7 L397.0 489.4 L394.4 488.0 L392.9 489.6 L390.1 489.8 L388.4 488.2 L390.3 484.1 L388.9 481.4 L387.8 478.7 L387.6 475.1 L385.4 474.4 L380.7 480.8 L380.3 478.2 L379.9 477.0  M380.7 480.8 L383.8 480.4 L383.4 483.8 L383.8 487.5 L384.1 491.3 L384.6 495.1 L385.7 496.9 L388.3 497.0 L389.2 499.5 L393.4 500.5  M374.7 486.5 L377.3 486.7 L378.5 490.0 L379.1 493.0 L376.0 497.5 L373.9 502.5 L374.6 503.4 L372.4 505.8 L372.7 510.3 L372.2 513.7 L369.5 515.3  M384.6 495.1 L381.6 495.9 L378.8 496.4 L378.0 494.9  M372.4 505.8 L375.0 508.8 L377.5 509.9 L380.0 507.8 L382.4 507.9 L384.6 505.1 L387.0 503.3 L388.9 500.1 L392.8 500.9  M375.3 523.6 L378.5 523.9 L379.7 522.1 L379.3 519.1 L380.8 516.6 L383.9 516.0 L386.9 513.9 L388.9 511.3 L389.9 510.8 L389.2 507.7 L390.2 505.3 L394.6 505.5 L395.9 506.0  M393.4 500.5 L393.8 503.8 L395.9 506.0 L396.2 509.1 L394.6 512.8 L394.0 515.6 L396.1 518.9 L398.5 522.0 L401.8 525.5 L405.7 527.7 L407.0 529.5 L411.5 529.6 L412.9 529.9 L417.4 527.8 L420.1 527.9 L422.0 530.8 L424.0 532.8 L423.8 536.9 L421.2 540.5 L423.5 542.7 L423.8 545.3 L425.6 546.9 L427.5 547.7 L429.0 545.5 L430.6 545.3 L433.4 545.6 L436.3 544.4 L438.9 545.8 L438.8 547.6 L441.4 549.0  M394.1 521.4 L396.2 524.4 L399.0 526.6 L401.7 529.4 L405.0 530.7 L405.7 527.7  M404.8 541.2 L405.4 535.9 L405.0 532.3 L407.8 532.7 L407.8 534.6 L411.8 536.1 L409.5 538.2 L411.2 539.4 L410.7 544.2  M410.7 544.2 L412.7 542.4 L413.4 538.8 L416.0 536.7 L417.6 533.8 L421.1 533.2 L422.0 530.8  M425.6 546.9 L425.1 549.5 L422.9 549.8 L420.2 552.6 L421.6 557.7 L420.4 560.3 L422.2 565.8 L421.0 570.1  M425.1 549.5 L427.2 551.7 L426.9 556.0 L429.0 555.3 L432.7 555.1 L434.2 559.3 L435.7 563.8 L434.0 563.8 L430.2 563.5 L429.1 565.0 L429.8 568.7  M429.7 545.6 L431.0 549.4 L434.6 551.2 L432.9 552.7 L435.2 555.0 L437.8 558.8 L439.8 561.4 L439.9 564.2 L439.6 568.7 L436.3 569.8 L435.9 571.4 L432.9 572.1  M435.7 563.8 L439.7 564.0  M477.5 512.2 L480.5 510.1  M473.2 507.5 L475.9 505.1 L479.2 503.7 L481.7 501.2 L483.2 501.3  M423.9 578.6 L426.0 580.3 L427.7 579.8  M444.2 589.9 L446.3 591.9 L450.0 591.4 L453.6 591.8 L455.8 590.2 L457.3 587.7 L458.4 586.2 L462.0 586.4  M512.7 593.0 L512.6 596.8 L512.3 600.4 L512.0 603.8  M364.4 495.3 L365.4 492.0 L366.3 487.9 L368.2 484.1 L369.4 482.7 L370.4 479.8 L373.0 475.7 L372.9 476.4 L373.0 478.2 L374.3 478.3 L373.3 480.8  M368.3 473.7 L368.4 475.2 L369.0 476.4 L369.7 477.9 L370.4 479.8  M374.9 470.2 L374.8 472.4 L375.5 473.1 L376.6 473.4 L377.4 474.8  M377.1 466.2 L377.3 468.4 L377.1 470.5 L376.6 473.4  M360.7 484.8 L361.4 486.0 L363.4 483.9 L363.6 485.3 L363.3 487.7 L362.2 493.5 L362.7 495.2 L362.6 497.2 L363.1 497.8  M353.2 514.5 L353.9 514.1 L354.8 516.9 L356.0 515.9 L357.2 517.4 L358.4 518.8 L357.8 524.0  M358.4 518.8 L360.9 519.6 L362.6 516.4 L362.7 514.7 L361.0 511.9 L361.4 508.4  M362.6 516.4 L364.2 512.7 L364.9 511.4  M420.6 431.2 L413.9 433.5 L408.2 436.7 L403.7 438.2 L402.0 438.8 L397.6 441.5 L395.4 444.1 L391.6 447.5 L389.6 450.1 L386.5 453.6 L386.1 456.1 L385.8 457.4 L383.2 459.7 L382.1 459.6  M395.4 444.1 L389.5 448.8 L389.6 450.1  M355.1 499.2 L355.0 496.4 L355.2 493.7  M353.0 507.8 L351.3 512.0 L350.3 516.6 L349.8 520.0 L349.5 528.7 L349.9 534.5 L350.4 536.3 L350.5 542.1 L350.9 545.6  M351.1 523.7 L351.5 523.8  M350.4 536.3 L351.3 537.5 L352.8 535.2 L352.3 534.2 L351.3 529.3 L351.4 524.7    M486.7 616.9 L486.5 619.7 L486.2 622.3 L485.9 624.8 L485.6 627.1 L485.3 629.3 L484.9 631.3 L484.5 633.2 L484.1 634.8  M504.5 616.0 L503.9 619.1 L503.3 622.0 L502.5 624.6 L501.7 627.1 L507.1 625.8 L505.8 628.7 L509.3 627.6 L512.8 626.5 L516.2 625.3 L519.5 624.1 L522.7 622.7 L525.8 621.3  M485.1 630.0 L488.9 629.5 L492.6 628.9 L496.3 628.2 L499.9 627.5 L503.5 626.7 L507.1 625.8  M505.8 628.7 L504.8 630.6 L503.7 632.4 L502.6 634.0 L501.4 635.4  M503.5 632.8 L506.3 632.4 L508.9 631.9 L511.5 631.4 L514.7 630.8  M397.6 441.5 L395.4 444.1  M389.5 448.8 L388.1 449.3 L387.6 451.2  M380.2 455.8 L382.3 455.1 L381.5 457.7 L381.7 459.0  M378.1 460.1 L379.3 461.0  M386.1 450.7 L389.2 449.4  M404.6 438.4 L409.1 436.6 L413.8 435.0 L417.7 432.3  M406.4 439.6 L410.1 437.8 L414.0 436.1  M377.1 466.2 L374.9 470.7  M375.5 473.1 L373.1 478.0 L374.3 478.3  M363.1 481.4 L364.8 481.4 L366.3 481.5 L369.7 477.9  M364.1 479.3 L365.7 477.7 L367.1 475.2  M360.8 484.7 L363.6 480.1  M395.9 437.5 L391.3 440.7 L391.4 440.0 L388.3 442.6 L387.2 443.4 L388.9 441.4 L390.2 440.1 L391.7 439.1 L393.5 437.5 L395.4 436.1 L398.3 434.4  M391.3 440.7 L389.4 442.6 L387.7 444.6 L385.8 447.3 L388.2 446.1 L390.9 444.0 L393.3 442.3  M385.8 447.3 L384.5 448.3 L384.1 449.6 L383.8 450.8 L379.7 455.3  M394.8 439.9 L394.1 441.5 L393.3 442.3 L395.6 442.1 L397.6 441.5  M397.1 439.0 L396.9 440.4 L395.6 442.1  M399.5 438.2 L399.5 439.3 L398.6 440.7  M400.5 438.3 L399.1 440.4  M406.4 431.3 L411.3 429.4 L416.0 428.2 L419.8 427.9 L420.4 428.5 L419.4 429.8 L420.5 430.0 L421.7 430.2  M420.4 428.5 L417.7 430.3 L414.3 431.7  M420.1 430.9 L417.8 431.3 L413.8 433.7 L408.2 436.5  M385.5 444.9 L384.8 446.1 L382.6 448.7 L379.7 452.7 L375.3 457.2 L375.5 456.4  M384.8 446.1 L386.2 445.2 L387.7 444.6  M384.5 448.3 L382.5 449.3 L382.6 448.7  M378.8 453.6 L377.6 456.3 L377.3 457.9  M375.3 457.2 L374.9 459.2 L375.0 460.0  M385.6 444.1 L388.4 441.6 L388.1 441.9 L387.6 442.6 L386.4 443.9 L385.5 444.9   M397.8 434.2 L395.4 435.9 L393.6 437.4  M504.1 426.3 L508.8 427.5 L513.3 429.0 L517.8 430.6 L522.1 432.5 " fill="none" stroke="#d4d400" stroke-width="1" stroke-linejoin="round"/><circle cx="465" cy="528" r="115.5" fill="url(#sh)"/></g></svg>
<div class="ball blue" style="left:440px;top:470px"><i>29</i></div>
<div class="ball blue" style="left:470px;top:480px"><i>13</i></div>
<div class="ball blue" style="left:396px;top:451px"><i>21</i></div>
<div class="ball blue" style="left:524px;top:443px"><i>30</i></div>
<div class="ball blue" style="left:360px;top:478px"><i>18</i></div>
<div class="ball org" style="left:411px;top:483px"><i>209</i></div>
<div class="ball org" style="left:444px;top:474px"><i>206</i></div>
<div class="ball red" style="left:465px;top:472px"><i style="color:#5aa8ff">10</i></div>
<div class="ball blue" style="left:513px;top:487px"><i>5</i></div>
<div class="ball blue" style="left:430px;top:508px"><i>15</i></div>
<div class="ball blue" style="left:477px;top:507px"><i>193</i></div>
<div class="ball org" style="left:365px;top:536px"><i>205</i></div>
<div class="ball blue" style="left:387px;top:536px"><i>20</i></div>
<div class="ball org" style="left:394px;top:546px"><i>202</i></div>
<div class="ball org" style="left:438px;top:556px"><i>203</i></div>
<div class="ball org" style="left:482px;top:554px"><i>201</i></div>
<div class="ball org" style="left:513px;top:548px"><i>204</i></div>
<div class="ball blue" style="left:500px;top:577px"><i>2</i></div>
<div class="ball org" style="left:438px;top:584px"><i>208</i></div>
<div class="ball blue" style="left:452px;top:596px"><i>24</i></div>
<div class="ball org" style="left:468px;top:596px"><i>207</i></div>
<div class="ball org" style="left:440px;top:615px"><i>210</i></div>
<svg class="a" style="left:555px;top:400px" width="96" height="100" viewBox="555 400 96 100"><g transform="translate(604.9,452.4)" stroke="#000" stroke-width=".7" stroke-linejoin="miter"><g transform="rotate(45)"><path d="M0 0L-4.59 -11.09L0 -23.00Z" fill="#000"/><path d="M0 0L4.59 -11.09L0 -23.00Z" fill="#fff"/></g><g transform="rotate(135)"><path d="M0 0L-4.59 -11.09L0 -23.00Z" fill="#000"/><path d="M0 0L4.59 -11.09L0 -23.00Z" fill="#fff"/></g><g transform="rotate(225)"><path d="M0 0L-4.59 -11.09L0 -23.00Z" fill="#000"/><path d="M0 0L4.59 -11.09L0 -23.00Z" fill="#fff"/></g><g transform="rotate(315)"><path d="M0 0L-4.59 -11.09L0 -23.00Z" fill="#000"/><path d="M0 0L4.59 -11.09L0 -23.00Z" fill="#fff"/></g><g transform="rotate(0)"><path d="M0 0L-4.59 -11.09L0 -30.50Z" fill="#000"/><path d="M0 0L4.59 -11.09L0 -30.50Z" fill="#fff"/></g><g transform="rotate(90)"><path d="M0 0L-4.59 -11.09L0 -30.50Z" fill="#000"/><path d="M0 0L4.59 -11.09L0 -30.50Z" fill="#fff"/></g><g transform="rotate(180)"><path d="M0 0L-4.59 -11.09L0 -30.50Z" fill="#000"/><path d="M0 0L4.59 -11.09L0 -30.50Z" fill="#fff"/></g><g transform="rotate(270)"><path d="M0 0L-4.59 -11.09L0 -30.50Z" fill="#000"/><path d="M0 0L4.59 -11.09L0 -30.50Z" fill="#fff"/></g></g></svg>
<div class="t" style="left:600.60px;top:408.70px;font:15px 'Liberation Sans',sans-serif;line-height:15px;letter-spacing:-1.044px;-webkit-text-stroke:.35px #000;">N</div>
<div class="t" style="left:600.80px;top:484.60px;font:15px 'Liberation Sans',sans-serif;line-height:15px;letter-spacing:-0.616px;-webkit-text-stroke:.35px #000;">S</div>
<div class="t" style="left:561.00px;top:444.30px;font:15px 'Liberation Sans',sans-serif;line-height:15px;letter-spacing:1.428px;-webkit-text-stroke:.35px #000;">W</div>
<div class="t" style="left:637.20px;top:444.30px;font:15px 'Liberation Sans',sans-serif;line-height:15px;letter-spacing:-1.616px;-webkit-text-stroke:.35px #000;">E</div>
<div class="a" style="left:602px;top:573px;width:44px;height:20px;background:#efefef"></div>
<div class="t" style="left:602.80px;top:576.85px;font:14px 'Liberation Sans',sans-serif;line-height:14px;letter-spacing:-1.093px;-webkit-text-stroke:.45px #000;">GPS</div>
<div class="a" style="left:633px;top:576px;width:13px;height:13px;border:1px solid #8e8f8f;background:linear-gradient(135deg,#cfd4da 0,#f4f5f7 60%,#fff 100%);box-shadow:inset 0 0 0 1px #f4f4f4"><svg width="11" height="11" viewBox="0 0 11 11" style="position:absolute;left:0;top:0"><path d="M2.6 5.2L4.6 8.2L8.6 2.2" fill="none" stroke="#3a4a9c" stroke-width="1.8"/></svg></div>
<div class="a" style="left:576px;top:593px;width:70px;height:20px;background:#efefef"></div>
<div class="t" style="left:576.70px;top:596.85px;font:14px 'Liberation Sans',sans-serif;line-height:14px;letter-spacing:0.149px;-webkit-text-stroke:.45px #000;">Glonass</div>
<div class="a" style="left:633px;top:596px;width:13px;height:13px;border:1px solid #8e8f8f;background:linear-gradient(135deg,#cfd4da 0,#f4f5f7 60%,#fff 100%);box-shadow:inset 0 0 0 1px #f4f4f4"><svg width="11" height="11" viewBox="0 0 11 11" style="position:absolute;left:0;top:0"><path d="M2.6 5.2L4.6 8.2L8.6 2.2" fill="none" stroke="#3a4a9c" stroke-width="1.8"/></svg></div>
<div class="a" style="left:584px;top:613px;width:62px;height:20px;background:#efefef"></div>
<div class="t" style="left:585.00px;top:616.85px;font:14px 'Liberation Sans',sans-serif;line-height:14px;letter-spacing:0.084px;-webkit-text-stroke:.45px #000;">Beidou</div>
<div class="a" style="left:633px;top:616px;width:13px;height:13px;border:1px solid #8e8f8f;background:linear-gradient(135deg,#cfd4da 0,#f4f5f7 60%,#fff 100%);box-shadow:inset 0 0 0 1px #f4f4f4"><svg width="11" height="11" viewBox="0 0 11 11" style="position:absolute;left:0;top:0"><path d="M2.6 5.2L4.6 8.2L8.6 2.2" fill="none" stroke="#3a4a9c" stroke-width="1.8"/></svg></div>
<div class="a" style="left:584px;top:633px;width:62px;height:20px;background:#efefef"></div>
<div class="t" style="left:585.00px;top:636.85px;font:14px 'Liberation Sans',sans-serif;line-height:14px;letter-spacing:0.072px;-webkit-text-stroke:.45px #000;">Galileo</div>
<div class="a" style="left:633px;top:636px;width:13px;height:13px;border:1px solid #8e8f8f;background:linear-gradient(135deg,#cfd4da 0,#f4f5f7 60%,#fff 100%);box-shadow:inset 0 0 0 1px #f4f4f4"><svg width="11" height="11" viewBox="0 0 11 11" style="position:absolute;left:0;top:0"><path d="M2.6 5.2L4.6 8.2L8.6 2.2" fill="none" stroke="#3a4a9c" stroke-width="1.8"/></svg></div>
<div class="panel" style="left:664px;top:402px;width:343px;height:253px"></div>
<div class="tab" style="left:664px;top:382px;width:106px;height:21px"></div>
<div class="t" style="left:669.80px;top:387.30px;font:13px 'Liberation Sans',sans-serif;line-height:13px;letter-spacing:0.388px;">Scatter View</div>
<svg class="a" style="left:665px;top:403px" width="341" height="251" viewBox="665 403 341 251"><rect x="710" y="425" width="201" height="201" fill="#fff"/><line x1="710.5" y1="425" x2="710.5" y2="626" stroke="#b4b4b4" stroke-dasharray="3,3"/><line x1="710" y1="425.5" x2="911" y2="425.5" stroke="#b4b4b4" stroke-dasharray="3,3"/><line x1="760.5" y1="425" x2="760.5" y2="626" stroke="#b4b4b4" stroke-dasharray="3,3"/><line x1="710" y1="475.5" x2="911" y2="475.5" stroke="#b4b4b4" stroke-dasharray="3,3"/><line x1="810.5" y1="425" x2="810.5" y2="626" stroke="#b4b4b4" stroke-dasharray="3,3"/><line x1="710" y1="525.5" x2="911" y2="525.5" stroke="#b4b4b4" stroke-dasharray="3,3"/><line x1="860.5" y1="425" x2="860.5" y2="626" stroke="#b4b4b4" stroke-dasharray="3,3"/><line x1="710" y1="575.5" x2="911" y2="575.5" stroke="#b4b4b4" stroke-dasharray="3,3"/><line x1="910.5" y1="425" x2="910.5" y2="626" stroke="#b4b4b4" stroke-dasharray="3,3"/><line x1="710" y1="625.5" x2="911" y2="625.5" stroke="#b4b4b4" stroke-dasharray="3,3"/><line x1="735" y1="525.5" x2="888" y2="525.5" stroke="#b4b4b4"/><line x1="810.5" y1="446" x2="810.5" y2="604" stroke="#b4b4b4"/><g fill="#fff" stroke="#c43000" stroke-width="1.05"><circle cx="798.0" cy="503.0" r="1.9"/><circle cx="798.0" cy="503.0" r="1.9"/><circle cx="823.0" cy="488.0" r="1.9"/><circle cx="818.0" cy="510.5" r="1.9"/><circle cx="840.5" cy="485.5" r="1.9"/><circle cx="805.5" cy="525.5" r="1.9"/><circle cx="835.5" cy="500.5" r="1.9"/><circle cx="820.5" cy="493.0" r="1.9"/><circle cx="800.5" cy="503.0" r="1.9"/><circle cx="795.5" cy="510.5" r="1.9"/><circle cx="808.0" cy="520.5" r="1.9"/><circle cx="813.0" cy="518.0" r="1.9"/><circle cx="815.5" cy="500.5" r="1.9"/><circle cx="793.0" cy="490.5" r="1.9"/><circle cx="833.0" cy="505.5" r="1.9"/><circle cx="798.0" cy="528.0" r="1.9"/><circle cx="828.0" cy="495.5" r="1.9"/><circle cx="818.0" cy="513.0" r="1.9"/><circle cx="820.5" cy="500.5" r="1.9"/><circle cx="825.5" cy="485.5" r="1.9"/><circle cx="825.5" cy="480.5" r="1.9"/><circle cx="810.5" cy="510.5" r="1.9"/><circle cx="820.5" cy="493.0" r="1.9"/><circle cx="820.5" cy="515.5" r="1.9"/><circle cx="820.5" cy="490.5" r="1.9"/><circle cx="813.0" cy="510.5" r="1.9"/><circle cx="818.0" cy="493.0" r="1.9"/><circle cx="810.5" cy="495.5" r="1.9"/><circle cx="833.0" cy="490.5" r="1.9"/><circle cx="805.5" cy="515.5" r="1.9"/><circle cx="833.0" cy="508.0" r="1.9"/><circle cx="823.0" cy="510.5" r="1.9"/><circle cx="840.5" cy="518.0" r="1.9"/><circle cx="825.5" cy="480.5" r="1.9"/><circle cx="803.0" cy="515.5" r="1.9"/><circle cx="813.0" cy="518.0" r="1.9"/><circle cx="805.5" cy="513.0" r="1.9"/><circle cx="815.5" cy="510.5" r="1.9"/><circle cx="828.0" cy="503.0" r="1.9"/><circle cx="825.5" cy="500.5" r="1.9"/><circle cx="808.0" cy="510.5" r="1.9"/><circle cx="808.0" cy="525.5" r="1.9"/><circle cx="820.5" cy="503.0" r="1.9"/><circle cx="805.5" cy="520.5" r="1.9"/><circle cx="793.0" cy="515.5" r="1.9"/><circle cx="815.5" cy="528.0" r="1.9"/><circle cx="828.0" cy="510.5" r="1.9"/><circle cx="843.0" cy="520.5" r="1.9"/><circle cx="825.5" cy="533.0" r="1.9"/><circle cx="805.5" cy="518.0" r="1.9"/><circle cx="810.5" cy="510.5" r="1.9"/><circle cx="798.0" cy="493.0" r="1.9"/><circle cx="815.5" cy="508.0" r="1.9"/><circle cx="805.5" cy="505.5" r="1.9"/><circle cx="795.5" cy="508.0" r="1.9"/><circle cx="815.5" cy="503.0" r="1.9"/><circle cx="813.0" cy="515.5" r="1.9"/><circle cx="835.5" cy="515.5" r="1.9"/><circle cx="828.0" cy="513.0" r="1.9"/><circle cx="820.5" cy="488.0" r="1.9"/><circle cx="805.5" cy="513.0" r="1.9"/><circle cx="788.0" cy="508.0" r="1.9"/><circle cx="825.5" cy="488.0" r="1.9"/><circle cx="820.5" cy="488.0" r="1.9"/><circle cx="803.0" cy="505.5" r="1.9"/><circle cx="833.0" cy="505.5" r="1.9"/><circle cx="810.5" cy="525.5" r="1.9"/><circle cx="818.0" cy="508.0" r="1.9"/><circle cx="813.0" cy="505.5" r="1.9"/><circle cx="818.0" cy="495.5" r="1.9"/><circle cx="805.5" cy="518.0" r="1.9"/><circle cx="800.5" cy="530.5" r="1.9"/><circle cx="813.0" cy="515.5" r="1.9"/><circle cx="818.0" cy="503.0" r="1.9"/><circle cx="815.5" cy="515.5" r="1.9"/><circle cx="803.0" cy="488.0" r="1.9"/><circle cx="798.0" cy="525.5" r="1.9"/><circle cx="838.0" cy="510.5" r="1.9"/><circle cx="795.5" cy="503.0" r="1.9"/><circle cx="803.0" cy="493.0" r="1.9"/><circle cx="810.5" cy="515.5" r="1.9"/><circle cx="825.5" cy="523.0" r="1.9"/><circle cx="835.5" cy="505.5" r="1.9"/><circle cx="803.0" cy="478.0" r="1.9"/><circle cx="813.0" cy="500.5" r="1.9"/><circle cx="790.5" cy="518.0" r="1.9"/><circle cx="820.5" cy="513.0" r="1.9"/><circle cx="818.0" cy="513.0" r="1.9"/><circle cx="793.0" cy="510.5" r="1.9"/><circle cx="823.0" cy="505.5" r="1.9"/><circle cx="803.0" cy="508.0" r="1.9"/><circle cx="805.5" cy="520.5" r="1.9"/><circle cx="803.0" cy="510.5" r="1.9"/><circle cx="808.0" cy="510.5" r="1.9"/><circle cx="795.5" cy="508.0" r="1.9"/><circle cx="835.5" cy="505.5" r="1.9"/><circle cx="823.0" cy="523.0" r="1.9"/><circle cx="815.5" cy="510.5" r="1.9"/><circle cx="815.5" cy="488.0" r="1.9"/><circle cx="790.5" cy="498.0" r="1.9"/><circle cx="803.0" cy="505.5" r="1.9"/><circle cx="818.0" cy="508.0" r="1.9"/><circle cx="820.5" cy="480.5" r="1.9"/><circle cx="803.0" cy="490.5" r="1.9"/><circle cx="815.5" cy="513.0" r="1.9"/><circle cx="815.5" cy="495.5" r="1.9"/><circle cx="803.0" cy="500.5" r="1.9"/><circle cx="808.0" cy="508.0" r="1.9"/><circle cx="800.5" cy="523.0" r="1.9"/><circle cx="828.0" cy="520.5" r="1.9"/><circle cx="820.5" cy="480.5" r="1.9"/><circle cx="828.0" cy="510.5" r="1.9"/><circle cx="825.5" cy="508.0" r="1.9"/><circle cx="823.0" cy="510.5" r="1.9"/><circle cx="815.5" cy="518.0" r="1.9"/><circle cx="825.5" cy="518.0" r="1.9"/><circle cx="828.0" cy="493.0" r="1.9"/><circle cx="828.0" cy="503.0" r="1.9"/><circle cx="790.5" cy="510.5" r="1.9"/><circle cx="813.0" cy="515.5" r="1.9"/><circle cx="820.5" cy="503.0" r="1.9"/><circle cx="795.5" cy="510.5" r="1.9"/><circle cx="820.5" cy="495.5" r="1.9"/><circle cx="818.0" cy="518.0" r="1.9"/><circle cx="800.5" cy="508.0" r="1.9"/><circle cx="840.5" cy="500.5" r="1.9"/><circle cx="823.0" cy="488.0" r="1.9"/><circle cx="808.0" cy="500.5" r="1.9"/><circle cx="813.0" cy="505.5" r="1.9"/><circle cx="823.0" cy="525.5" r="1.9"/><circle cx="805.5" cy="518.0" r="1.9"/><circle cx="820.5" cy="533.0" r="1.9"/><circle cx="843.0" cy="520.5" r="1.9"/><circle cx="820.5" cy="530.5" r="1.9"/><circle cx="815.5" cy="510.5" r="1.9"/><circle cx="815.5" cy="505.5" r="1.9"/><circle cx="803.0" cy="523.0" r="1.9"/><circle cx="838.0" cy="510.5" r="1.9"/><circle cx="805.5" cy="523.0" r="1.9"/><circle cx="808.0" cy="530.5" r="1.9"/><circle cx="838.0" cy="498.0" r="1.9"/><circle cx="815.5" cy="490.5" r="1.9"/><circle cx="820.5" cy="490.5" r="1.9"/><circle cx="838.0" cy="503.0" r="1.9"/><circle cx="835.5" cy="493.0" r="1.9"/><circle cx="808.0" cy="505.5" r="1.9"/><circle cx="813.0" cy="508.0" r="1.9"/><circle cx="800.5" cy="498.0" r="1.9"/><circle cx="808.0" cy="498.0" r="1.9"/><circle cx="805.5" cy="510.5" r="1.9"/><circle cx="815.5" cy="503.0" r="1.9"/><circle cx="825.5" cy="500.5" r="1.9"/><circle cx="790.5" cy="488.0" r="1.9"/><circle cx="810.5" cy="510.5" r="1.9"/><circle cx="805.5" cy="503.0" r="1.9"/><circle cx="808.0" cy="508.0" r="1.9"/><circle cx="808.0" cy="520.5" r="1.9"/><circle cx="803.0" cy="515.5" r="1.9"/><circle cx="815.5" cy="515.5" r="1.9"/><circle cx="838.0" cy="518.0" r="1.9"/><circle cx="808.0" cy="495.5" r="1.9"/><circle cx="798.0" cy="515.5" r="1.9"/><circle cx="815.5" cy="515.5" r="1.9"/><circle cx="823.0" cy="503.0" r="1.9"/><circle cx="798.0" cy="498.0" r="1.9"/><circle cx="810.5" cy="508.0" r="1.9"/><circle cx="808.0" cy="523.0" r="1.9"/><circle cx="803.0" cy="495.5" r="1.9"/><circle cx="803.0" cy="485.5" r="1.9"/><circle cx="823.0" cy="500.5" r="1.9"/><circle cx="798.0" cy="525.5" r="1.9"/><circle cx="805.5" cy="500.5" r="1.9"/><circle cx="800.5" cy="490.5" r="1.9"/><circle cx="808.0" cy="488.0" r="1.9"/><circle cx="830.5" cy="510.5" r="1.9"/><circle cx="833.0" cy="493.0" r="1.9"/><circle cx="810.5" cy="518.0" r="1.9"/><circle cx="825.5" cy="498.0" r="1.9"/><circle cx="828.0" cy="498.0" r="1.9"/><circle cx="813.0" cy="518.0" r="1.9"/><circle cx="800.5" cy="488.0" r="1.9"/><circle cx="835.5" cy="485.5" r="1.9"/><circle cx="790.5" cy="498.0" r="1.9"/><circle cx="810.5" cy="493.0" r="1.9"/><circle cx="825.5" cy="510.5" r="1.9"/><circle cx="805.5" cy="495.5" r="1.9"/><circle cx="808.0" cy="500.5" r="1.9"/><circle cx="823.0" cy="523.0" r="1.9"/><circle cx="808.0" cy="510.5" r="1.9"/><circle cx="825.5" cy="513.0" r="1.9"/><circle cx="798.0" cy="510.5" r="1.9"/><circle cx="838.0" cy="505.5" r="1.9"/><circle cx="835.5" cy="495.5" r="1.9"/><circle cx="823.0" cy="500.5" r="1.9"/><circle cx="823.0" cy="508.0" r="1.9"/><circle cx="833.0" cy="483.0" r="1.9"/><circle cx="818.0" cy="493.0" r="1.9"/><circle cx="790.5" cy="513.0" r="1.9"/><circle cx="798.0" cy="508.0" r="1.9"/><circle cx="828.0" cy="523.0" r="1.9"/><circle cx="825.5" cy="530.5" r="1.9"/><circle cx="838.0" cy="508.0" r="1.9"/><circle cx="810.5" cy="533.0" r="1.9"/><circle cx="808.0" cy="503.0" r="1.9"/><circle cx="830.5" cy="503.0" r="1.9"/><circle cx="820.5" cy="488.0" r="1.9"/><circle cx="823.0" cy="505.5" r="1.9"/><circle cx="833.0" cy="488.0" r="1.9"/><circle cx="818.0" cy="500.5" r="1.9"/><circle cx="823.0" cy="498.0" r="1.9"/><circle cx="818.0" cy="480.5" r="1.9"/><circle cx="818.0" cy="495.5" r="1.9"/><circle cx="828.0" cy="480.5" r="1.9"/><circle cx="788.0" cy="518.0" r="1.9"/><circle cx="815.5" cy="473.0" r="1.9"/><circle cx="805.5" cy="490.5" r="1.9"/><circle cx="805.5" cy="505.5" r="1.9"/><circle cx="843.0" cy="510.5" r="1.9"/><circle cx="798.0" cy="510.5" r="1.9"/><circle cx="838.0" cy="503.0" r="1.9"/><circle cx="833.0" cy="500.5" r="1.9"/><circle cx="823.0" cy="528.0" r="1.9"/><circle cx="820.5" cy="498.0" r="1.9"/><circle cx="808.0" cy="508.0" r="1.9"/><circle cx="845.5" cy="500.5" r="1.9"/><circle cx="820.5" cy="510.5" r="1.9"/><circle cx="815.5" cy="513.0" r="1.9"/><circle cx="825.5" cy="513.0" r="1.9"/><circle cx="820.5" cy="513.0" r="1.9"/><circle cx="808.0" cy="508.0" r="1.9"/><circle cx="810.5" cy="493.0" r="1.9"/><circle cx="810.5" cy="490.5" r="1.9"/><circle cx="800.5" cy="488.0" r="1.9"/><circle cx="803.0" cy="495.5" r="1.9"/><circle cx="828.0" cy="523.0" r="1.9"/><circle cx="798.0" cy="490.5" r="1.9"/><circle cx="800.5" cy="513.0" r="1.9"/><circle cx="843.0" cy="503.0" r="1.9"/><circle cx="808.0" cy="515.5" r="1.9"/><circle cx="803.0" cy="510.5" r="1.9"/><circle cx="798.0" cy="493.0" r="1.9"/><circle cx="825.5" cy="480.5" r="1.9"/><circle cx="835.5" cy="508.0" r="1.9"/><circle cx="803.0" cy="483.0" r="1.9"/><circle cx="820.5" cy="498.0" r="1.9"/><circle cx="813.0" cy="515.5" r="1.9"/><circle cx="828.0" cy="520.5" r="1.9"/><circle cx="818.0" cy="495.5" r="1.9"/><circle cx="810.5" cy="503.0" r="1.9"/><circle cx="800.5" cy="500.5" r="1.9"/><circle cx="820.5" cy="533.0" r="1.9"/><circle cx="808.0" cy="493.0" r="1.9"/><circle cx="798.0" cy="493.0" r="1.9"/><circle cx="823.0" cy="525.5" r="1.9"/><circle cx="830.5" cy="500.5" r="1.9"/><circle cx="813.0" cy="510.5" r="1.9"/><circle cx="788.0" cy="510.5" r="1.9"/><circle cx="810.5" cy="513.0" r="1.9"/><circle cx="833.0" cy="513.0" r="1.9"/><circle cx="808.0" cy="505.5" r="1.9"/><circle cx="835.5" cy="503.0" r="1.9"/><circle cx="823.0" cy="513.0" r="1.9"/><circle cx="810.5" cy="513.0" r="1.9"/><circle cx="818.0" cy="485.5" r="1.9"/><circle cx="808.0" cy="505.5" r="1.9"/><circle cx="798.0" cy="515.5" r="1.9"/><circle cx="810.5" cy="510.5" r="1.9"/><circle cx="810.5" cy="508.0" r="1.9"/><circle cx="810.5" cy="518.0" r="1.9"/><circle cx="815.5" cy="520.5" r="1.9"/><circle cx="818.0" cy="508.0" r="1.9"/><circle cx="808.0" cy="505.5" r="1.9"/><circle cx="808.0" cy="510.5" r="1.9"/><circle cx="815.5" cy="485.5" r="1.9"/><circle cx="813.0" cy="508.0" r="1.9"/><circle cx="800.5" cy="505.5" r="1.9"/><circle cx="808.0" cy="530.5" r="1.9"/><circle cx="825.5" cy="515.5" r="1.9"/><circle cx="800.5" cy="510.5" r="1.9"/><circle cx="815.5" cy="500.5" r="1.9"/><circle cx="838.0" cy="515.5" r="1.9"/><circle cx="815.5" cy="518.0" r="1.9"/><circle cx="823.0" cy="500.5" r="1.9"/><circle cx="800.5" cy="508.0" r="1.9"/><circle cx="810.5" cy="523.0" r="1.9"/><circle cx="810.5" cy="490.5" r="1.9"/><circle cx="820.5" cy="515.5" r="1.9"/><circle cx="818.0" cy="513.0" r="1.9"/><circle cx="818.0" cy="505.5" r="1.9"/><circle cx="813.0" cy="493.0" r="1.9"/><circle cx="838.0" cy="518.0" r="1.9"/><circle cx="803.0" cy="490.5" r="1.9"/><circle cx="805.5" cy="505.5" r="1.9"/><circle cx="823.0" cy="515.5" r="1.9"/><circle cx="823.0" cy="483.0" r="1.9"/><circle cx="820.5" cy="508.0" r="1.9"/><circle cx="815.5" cy="518.0" r="1.9"/><circle cx="833.0" cy="520.5" r="1.9"/><circle cx="825.5" cy="498.0" r="1.9"/><circle cx="813.0" cy="515.5" r="1.9"/><circle cx="818.0" cy="483.0" r="1.9"/><circle cx="800.5" cy="490.5" r="1.9"/><circle cx="808.0" cy="513.0" r="1.9"/><circle cx="838.0" cy="513.0" r="1.9"/><circle cx="813.0" cy="510.5" r="1.9"/><circle cx="798.0" cy="500.5" r="1.9"/><circle cx="835.5" cy="495.5" r="1.9"/><circle cx="815.5" cy="478.0" r="1.9"/><circle cx="810.5" cy="480.5" r="1.9"/><circle cx="813.0" cy="485.5" r="1.9"/><circle cx="790.5" cy="503.0" r="1.9"/><circle cx="833.0" cy="510.5" r="1.9"/><circle cx="795.5" cy="515.5" r="1.9"/><circle cx="800.5" cy="530.5" r="1.9"/><circle cx="785.5" cy="510.5" r="1.9"/><circle cx="818.0" cy="513.0" r="1.9"/><circle cx="818.0" cy="488.0" r="1.9"/><circle cx="823.0" cy="530.5" r="1.9"/><circle cx="805.5" cy="505.5" r="1.9"/><circle cx="813.0" cy="505.5" r="1.9"/><circle cx="813.0" cy="525.5" r="1.9"/><circle cx="820.5" cy="495.5" r="1.9"/><circle cx="800.5" cy="508.0" r="1.9"/><circle cx="813.0" cy="478.0" r="1.9"/><circle cx="833.0" cy="513.0" r="1.9"/><circle cx="820.5" cy="515.5" r="1.9"/><circle cx="815.5" cy="500.5" r="1.9"/><circle cx="803.0" cy="520.5" r="1.9"/><circle cx="810.5" cy="510.5" r="1.9"/><circle cx="823.0" cy="493.0" r="1.9"/><circle cx="805.5" cy="533.0" r="1.9"/><circle cx="830.5" cy="498.0" r="1.9"/><circle cx="790.5" cy="508.0" r="1.9"/><circle cx="828.0" cy="490.5" r="1.9"/><circle cx="828.0" cy="500.5" r="1.9"/><circle cx="825.5" cy="490.5" r="1.9"/><circle cx="810.5" cy="503.0" r="1.9"/><circle cx="843.0" cy="500.5" r="1.9"/><circle cx="818.0" cy="493.0" r="1.9"/><circle cx="818.0" cy="488.0" r="1.9"/><circle cx="808.0" cy="495.5" r="1.9"/><circle cx="813.0" cy="508.0" r="1.9"/><circle cx="813.0" cy="510.5" r="1.9"/><circle cx="830.5" cy="513.0" r="1.9"/><circle cx="825.5" cy="515.5" r="1.9"/><circle cx="820.5" cy="490.5" r="1.9"/><circle cx="808.0" cy="508.0" r="1.9"/><circle cx="820.5" cy="488.0" r="1.9"/><circle cx="823.0" cy="513.0" r="1.9"/><circle cx="838.0" cy="490.5" r="1.9"/><circle cx="815.5" cy="503.0" r="1.9"/><circle cx="815.5" cy="490.5" r="1.9"/><circle cx="813.0" cy="518.0" r="1.9"/><circle cx="818.0" cy="528.0" r="1.9"/><circle cx="830.5" cy="500.5" r="1.9"/><circle cx="818.0" cy="523.0" r="1.9"/><circle cx="808.0" cy="500.5" r="1.9"/><circle cx="828.0" cy="485.5" r="1.9"/><circle cx="810.5" cy="490.5" r="1.9"/><circle cx="833.0" cy="485.5" r="1.9"/><circle cx="813.0" cy="528.0" r="1.9"/><circle cx="820.5" cy="493.0" r="1.9"/><circle cx="803.0" cy="498.0" r="1.9"/><circle cx="818.0" cy="493.0" r="1.9"/><circle cx="818.0" cy="500.5" r="1.9"/><circle cx="803.0" cy="520.5" r="1.9"/><circle cx="830.5" cy="505.5" r="1.9"/><circle cx="825.5" cy="508.0" r="1.9"/><circle cx="818.0" cy="483.0" r="1.9"/><circle cx="803.0" cy="500.5" r="1.9"/><circle cx="805.5" cy="498.0" r="1.9"/><circle cx="815.5" cy="495.5" r="1.9"/><circle cx="808.0" cy="505.5" r="1.9"/><circle cx="818.0" cy="498.0" r="1.9"/><circle cx="808.0" cy="503.0" r="1.9"/><circle cx="810.5" cy="525.5" r="1.9"/><circle cx="833.0" cy="500.5" r="1.9"/><circle cx="830.5" cy="498.0" r="1.9"/><circle cx="795.5" cy="508.0" r="1.9"/><circle cx="810.5" cy="495.5" r="1.9"/><circle cx="798.0" cy="480.5" r="1.9"/><circle cx="815.5" cy="483.0" r="1.9"/><circle cx="795.5" cy="503.0" r="1.9"/><circle cx="803.0" cy="490.5" r="1.9"/><circle cx="820.5" cy="525.5" r="1.9"/><circle cx="803.0" cy="498.0" r="1.9"/><circle cx="833.0" cy="530.5" r="1.9"/><circle cx="820.5" cy="508.0" r="1.9"/><circle cx="803.0" cy="508.0" r="1.9"/><circle cx="825.5" cy="505.5" r="1.9"/><circle cx="820.5" cy="480.5" r="1.9"/><circle cx="835.5" cy="503.0" r="1.9"/><circle cx="818.0" cy="488.0" r="1.9"/><circle cx="795.5" cy="515.5" r="1.9"/><circle cx="810.5" cy="528.0" r="1.9"/><circle cx="845.5" cy="508.0" r="1.9"/><circle cx="803.0" cy="520.5" r="1.9"/><circle cx="808.0" cy="498.0" r="1.9"/><circle cx="805.5" cy="508.0" r="1.9"/><circle cx="813.0" cy="498.0" r="1.9"/><circle cx="820.5" cy="500.5" r="1.9"/><circle cx="835.5" cy="488.0" r="1.9"/><circle cx="790.5" cy="500.5" r="1.9"/><circle cx="828.0" cy="500.5" r="1.9"/><circle cx="820.5" cy="518.0" r="1.9"/><circle cx="815.5" cy="480.5" r="1.9"/><circle cx="803.0" cy="485.5" r="1.9"/><circle cx="825.5" cy="520.5" r="1.9"/><circle cx="810.5" cy="525.5" r="1.9"/><circle cx="818.0" cy="513.0" r="1.9"/><circle cx="810.5" cy="515.5" r="1.9"/><circle cx="838.0" cy="500.5" r="1.9"/><circle cx="825.5" cy="505.5" r="1.9"/><circle cx="798.0" cy="498.0" r="1.9"/><circle cx="815.5" cy="513.0" r="1.9"/><circle cx="810.5" cy="480.5" r="1.9"/><circle cx="825.5" cy="493.0" r="1.9"/><circle cx="800.5" cy="513.0" r="1.9"/><circle cx="805.5" cy="480.5" r="1.9"/><circle cx="813.0" cy="490.5" r="1.9"/><circle cx="810.5" cy="523.0" r="1.9"/><circle cx="823.0" cy="495.5" r="1.9"/><circle cx="828.0" cy="508.0" r="1.9"/><circle cx="825.5" cy="493.0" r="1.9"/><circle cx="808.0" cy="510.5" r="1.9"/><circle cx="815.5" cy="495.5" r="1.9"/><circle cx="808.0" cy="498.0" r="1.9"/><circle cx="825.5" cy="498.0" r="1.9"/><circle cx="828.0" cy="503.0" r="1.9"/><circle cx="800.5" cy="505.5" r="1.9"/><circle cx="813.0" cy="503.0" r="1.9"/><circle cx="805.5" cy="525.5" r="1.9"/><circle cx="845.5" cy="513.0" r="1.9"/><circle cx="788.0" cy="498.0" r="1.9"/><circle cx="818.0" cy="500.5" r="1.9"/><circle cx="820.5" cy="500.5" r="1.9"/><circle cx="818.0" cy="518.0" r="1.9"/><circle cx="828.0" cy="503.0" r="1.9"/><circle cx="835.5" cy="500.5" r="1.9"/><circle cx="823.0" cy="528.0" r="1.9"/><circle cx="825.5" cy="530.5" r="1.9"/><circle cx="823.0" cy="505.5" r="1.9"/><circle cx="795.5" cy="493.0" r="1.9"/><circle cx="820.5" cy="505.5" r="1.9"/><circle cx="818.0" cy="490.5" r="1.9"/><circle cx="808.0" cy="518.0" r="1.9"/><circle cx="828.0" cy="510.5" r="1.9"/><circle cx="803.0" cy="485.5" r="1.9"/><circle cx="815.5" cy="525.5" r="1.9"/><circle cx="820.5" cy="498.0" r="1.9"/><circle cx="808.0" cy="493.0" r="1.9"/><circle cx="800.5" cy="508.0" r="1.9"/><circle cx="825.5" cy="513.0" r="1.9"/><circle cx="828.0" cy="505.5" r="1.9"/><circle cx="813.0" cy="515.5" r="1.9"/><circle cx="823.0" cy="490.5" r="1.9"/><circle cx="830.5" cy="485.5" r="1.9"/><circle cx="810.5" cy="515.5" r="1.9"/><circle cx="840.5" cy="520.5" r="1.9"/><circle cx="795.5" cy="508.0" r="1.9"/><circle cx="828.0" cy="523.0" r="1.9"/><circle cx="808.0" cy="520.5" r="1.9"/><circle cx="818.0" cy="483.0" r="1.9"/><circle cx="813.0" cy="505.5" r="1.9"/><circle cx="798.0" cy="500.5" r="1.9"/><circle cx="825.5" cy="508.0" r="1.9"/><circle cx="843.0" cy="503.0" r="1.9"/><circle cx="823.0" cy="510.5" r="1.9"/><circle cx="805.5" cy="505.5" r="1.9"/><circle cx="823.0" cy="520.5" r="1.9"/><circle cx="815.5" cy="478.0" r="1.9"/><circle cx="813.0" cy="483.0" r="1.9"/><circle cx="790.5" cy="518.0" r="1.9"/><circle cx="818.0" cy="478.0" r="1.9"/><circle cx="818.0" cy="523.0" r="1.9"/><circle cx="818.0" cy="513.0" r="1.9"/><circle cx="820.5" cy="503.0" r="1.9"/><circle cx="835.5" cy="523.0" r="1.9"/><circle cx="823.0" cy="490.5" r="1.9"/><circle cx="828.0" cy="503.0" r="1.9"/><circle cx="835.5" cy="520.5" r="1.9"/><circle cx="808.0" cy="520.5" r="1.9"/><circle cx="810.5" cy="495.5" r="1.9"/><circle cx="813.0" cy="485.5" r="1.9"/><circle cx="820.5" cy="498.0" r="1.9"/><circle cx="808.0" cy="505.5" r="1.9"/><circle cx="835.5" cy="510.5" r="1.9"/><circle cx="815.5" cy="520.5" r="1.9"/><circle cx="808.0" cy="500.5" r="1.9"/><circle cx="790.5" cy="495.5" r="1.9"/><circle cx="798.0" cy="503.0" r="1.9"/><circle cx="803.0" cy="488.0" r="1.9"/><circle cx="805.5" cy="513.0" r="1.9"/><circle cx="810.5" cy="475.5" r="1.9"/><circle cx="815.5" cy="525.5" r="1.9"/><circle cx="830.5" cy="495.5" r="1.9"/><circle cx="808.0" cy="528.0" r="1.9"/><circle cx="810.5" cy="500.5" r="1.9"/><circle cx="815.5" cy="488.0" r="1.9"/><circle cx="830.5" cy="530.5" r="1.9"/><circle cx="810.5" cy="508.0" r="1.9"/><circle cx="828.0" cy="495.5" r="1.9"/><circle cx="813.0" cy="528.0" r="1.9"/><circle cx="805.5" cy="520.5" r="1.9"/><circle cx="803.0" cy="503.0" r="1.9"/><circle cx="833.0" cy="503.0" r="1.9"/><circle cx="803.0" cy="525.5" r="1.9"/><circle cx="833.0" cy="495.5" r="1.9"/><circle cx="810.5" cy="515.5" r="1.9"/><circle cx="820.5" cy="490.5" r="1.9"/><circle cx="795.5" cy="493.0" r="1.9"/><circle cx="828.0" cy="483.0" r="1.9"/><circle cx="815.5" cy="518.0" r="1.9"/><circle cx="813.0" cy="533.0" r="1.9"/><circle cx="813.0" cy="505.5" r="1.9"/><circle cx="805.5" cy="490.5" r="1.9"/><circle cx="808.0" cy="505.5" r="1.9"/><circle cx="820.5" cy="500.5" r="1.9"/><circle cx="808.0" cy="480.5" r="1.9"/><circle cx="813.0" cy="503.0" r="1.9"/><circle cx="798.0" cy="503.0" r="1.9"/><circle cx="820.5" cy="510.5" r="1.9"/><circle cx="798.0" cy="495.5" r="1.9"/><circle cx="833.0" cy="505.5" r="1.9"/><circle cx="833.0" cy="478.0" r="1.9"/><circle cx="815.5" cy="513.0" r="1.9"/><circle cx="823.0" cy="503.0" r="1.9"/><circle cx="838.0" cy="505.5" r="1.9"/><circle cx="833.0" cy="498.0" r="1.9"/><circle cx="815.5" cy="498.0" r="1.9"/><circle cx="808.0" cy="490.5" r="1.9"/><circle cx="808.0" cy="483.0" r="1.9"/><circle cx="805.5" cy="495.5" r="1.9"/><circle cx="805.5" cy="493.0" r="1.9"/><circle cx="798.0" cy="510.5" r="1.9"/><circle cx="818.0" cy="498.0" r="1.9"/><circle cx="810.5" cy="490.5" r="1.9"/><circle cx="815.5" cy="523.0" r="1.9"/><circle cx="805.5" cy="515.5" r="1.9"/><circle cx="800.5" cy="520.5" r="1.9"/><circle cx="804.4" cy="455.6" r="1.9"/><circle cx="795.0" cy="471.3" r="1.9"/><circle cx="822.4" cy="465.3" r="1.9"/><circle cx="824.4" cy="465.3" r="1.9"/><circle cx="815.0" cy="468.6" r="1.9"/><circle cx="845.3" cy="471.3" r="1.9"/><circle cx="859.6" cy="487.3" r="1.9"/><circle cx="850.5" cy="487.3" r="1.9"/><circle cx="856.0" cy="493.7" r="1.9"/><circle cx="856.4" cy="497.0" r="1.9"/><circle cx="770.6" cy="507.4" r="1.9"/><circle cx="767.5" cy="529.2" r="1.9"/><circle cx="781.5" cy="539.5" r="1.9"/><circle cx="791.6" cy="542.2" r="1.9"/><circle cx="802.3" cy="548.6" r="1.9"/><circle cx="807.0" cy="547.5" r="1.9"/><circle cx="816.4" cy="546.2" r="1.9"/><circle cx="823.5" cy="542.2" r="1.9"/><circle cx="776.7" cy="491.3" r="1.9"/><circle cx="781.5" cy="487.3" r="1.9"/><circle cx="790.3" cy="486.5" r="1.9"/><circle cx="843.2" cy="524.2" r="1.9"/><circle cx="839.5" cy="534.3" r="1.9"/><circle cx="829.6" cy="537.0" r="1.9"/><circle cx="845.0" cy="514.6" r="1.9"/><circle cx="848.9" cy="506.0" r="1.9"/><circle cx="806.0" cy="544.0" r="1.9"/><circle cx="804.0" cy="541.5" r="1.9"/><circle cx="786.0" cy="535.0" r="1.9"/><circle cx="778.0" cy="507.0" r="1.9"/><circle cx="776.0" cy="512.0" r="1.9"/></g><circle cx="805.5" cy="513.5" r="2.6" fill="#2222ff"/><rect x="914" y="425" width="5" height="139" fill="#b9b9b9"/><rect x="914" y="564" width="5" height="61" fill="#1e8efc"/></svg>
<div class="t" style="left:804.00px;top:430.26px;font:bold 16px 'Liberation Sans',sans-serif;line-height:16px;letter-spacing:0.938px;color:#b4b4b4;background:#fff;">N</div>
<div class="t" style="left:804.50px;top:607.96px;font:bold 16px 'Liberation Sans',sans-serif;line-height:16px;letter-spacing:0.828px;color:#b4b4b4;background:#fff;">S</div>
<div class="t" style="left:713.00px;top:517.96px;font:bold 16px 'Liberation Sans',sans-serif;line-height:16px;letter-spacing:2.891px;color:#b4b4b4;background:#fff;">W</div>
<div class="t" style="left:895.50px;top:517.96px;font:bold 16px 'Liberation Sans',sans-serif;line-height:16px;letter-spacing:0.328px;color:#b4b4b4;background:#fff;">E</div>
<div class="t" style="left:683.60px;top:418.44px;font:12px 'Liberation Sans',sans-serif;line-height:12px;letter-spacing:-0.090px;">0.02</div>
<div class="t" style="left:683.60px;top:468.44px;font:12px 'Liberation Sans',sans-serif;line-height:12px;letter-spacing:-0.090px;">0.01</div>
<div class="t" style="left:683.60px;top:518.44px;font:12px 'Liberation Sans',sans-serif;line-height:12px;letter-spacing:-0.090px;">0.00</div>
<div class="t" style="left:679.60px;top:568.44px;font:12px 'Liberation Sans',sans-serif;line-height:12px;letter-spacing:-0.072px;">-0.01</div>
<div class="t" style="left:679.60px;top:618.44px;font:12px 'Liberation Sans',sans-serif;line-height:12px;letter-spacing:-0.072px;">-0.02</div>
<div class="t" style="left:698.40px;top:629.74px;font:12px 'Liberation Sans',sans-serif;line-height:12px;letter-spacing:0.028px;">-0.02</div>
<div class="t" style="left:748.20px;top:629.74px;font:12px 'Liberation Sans',sans-serif;line-height:12px;letter-spacing:-0.032px;">-0.01</div>
<div class="t" style="left:800.80px;top:629.74px;font:12px 'Liberation Sans',sans-serif;line-height:12px;letter-spacing:-0.265px;">0.00</div>
<div class="t" style="left:850.80px;top:629.74px;font:12px 'Liberation Sans',sans-serif;line-height:12px;letter-spacing:-0.390px;">0.01</div>
<div class="t" style="left:900.60px;top:629.74px;font:12px 'Liberation Sans',sans-serif;line-height:12px;letter-spacing:-0.315px;">0.02</div>
<div class="t" style="left:693.30px;top:405.04px;font:12px 'Liberation Sans',sans-serif;line-height:12px;letter-spacing:0.100px;">(m)</div>
<div class="t" style="left:900.30px;top:641.84px;font:12px 'Liberation Sans',sans-serif;line-height:12px;letter-spacing:0.100px;">(m)</div>
<div class="t" style="left:717.50px;top:407.34px;font:12px 'Liberation Sans',sans-serif;line-height:12px;letter-spacing:-0.022px;">2D RMS : 0.0044  CEP 50% : 0.0036</div>
<div class="blk" style="left:923px;top:408px"></div>
<div class="t" style="left:937.00px;top:409.68px;font:italic 15.5px 'Liberation Sans',sans-serif;line-height:15.5px;letter-spacing:0.031px;color:#fff;">SCALE</div>
<div class="cmb" style="left:923px;top:427px"></div><div class="arr" style="left:989px;top:438px"></div>
<div class="t" style="left:927.00px;top:432.27px;font:13.5px 'Liberation Sans',sans-serif;line-height:13.5px;letter-spacing:-0.586px;">0.01m</div>
<div class="blk" style="left:923px;top:456px"></div>
<div class="t" style="left:937.00px;top:457.58px;font:italic 15.5px 'Liberation Sans',sans-serif;line-height:15.5px;letter-spacing:-0.163px;color:#fff;">COOR.</div>
<div class="cmb" style="left:923px;top:475px"></div><div class="arr" style="left:989px;top:486px"></div>
<div class="t" style="left:927.50px;top:480.07px;font:13.5px 'Liberation Sans',sans-serif;line-height:13.5px;letter-spacing:-0.105px;">ENU</div>
<div class="a" style="left:923px;top:514px;width:77px;height:16px;background:#f0f0f0"></div>
<div class="t" style="left:924.00px;top:514.66px;font:16px 'Liberation Sans',sans-serif;line-height:16px;letter-spacing:-0.142px;">117.10</div>
<div class="a" style="left:923px;top:535px;width:77px;height:16px;background:#f0f0f0"></div>
<div class="t" style="left:923.60px;top:535.96px;font:16px 'Liberation Sans',sans-serif;line-height:16px;letter-spacing:-0.038px;">(117.10)</div>
<div class="obtn" style="left:933px;top:590px"></div>
<div class="t" style="left:938.60px;top:595.32px;font:bold 12.5px 'Liberation Sans',sans-serif;line-height:12.5px;letter-spacing:-0.383px;color:#9d9a8e;text-shadow:1px 1px 0 #fff;">Set Origin</div>
<div class="obtn" style="left:933px;top:618px"></div>
<div class="t" style="left:951.00px;top:623.50px;font:bold 13px 'Liberation Sans',sans-serif;line-height:13px;letter-spacing:0.034px;">Clear</div>
<div class="panel" style="left:309px;top:679px;width:698px;height:55px"></div>
<div class="tab" style="left:309px;top:661px;width:100px;height:19px"></div>
<div class="t" style="left:315.20px;top:664.80px;font:13px 'Liberation Sans',sans-serif;line-height:13px;letter-spacing:0.396px;">Download</div>
<div class="a" style="left:493px;top:700px;width:513px;height:33px;background:#fff"></div>
<div class="a" style="left:313px;top:695px;width:67px;height:27px;border:1px solid #7b7a74;border-top-color:#fff;border-left-color:#fff;background:linear-gradient(#f1f0ea 0,#dcdad0 50%,#b9b6a7 100%)"><svg class="a" style="left:21px;top:1px" width="24" height="24" viewBox="0 0 24 24"><ellipse cx="12" cy="20.5" rx="8" ry="2.6" fill="#1a1a1a"/><ellipse cx="12" cy="19" rx="6.5" ry="2.6" fill="#9ab0c4" stroke="#4a5a6a" stroke-width=".6"/><circle cx="12" cy="10.5" r="8.5" fill="#2a9fd2" stroke="#1a6fa0" stroke-width=".8"/><ellipse cx="12" cy="6.5" rx="6" ry="3.6" fill="#8fd6f4" opacity=".75"/><path d="M11 5h2v5h2.6L12 13.8 8.4 10H11z" fill="#fff"/><path d="M6.5 12.5c1 3 3.5 4.2 5.5 4.2s4.500-1.200 5.500-4.200" fill="none" stroke="#fff" stroke-width="1.6"/></svg></div>
<div class="cmb" style="left:383px;top:696px;width:80px"></div><div class="arr" style="left:450px;top:707px"></div>
<div class="t" style="left:386.80px;top:701.47px;font:13.5px 'Liberation Sans',sans-serif;line-height:13.5px;letter-spacing:-0.527px;">460800</div>
<div class="btn" style="left:465px;top:697px;width:22px;height:22px"></div>
<div class="t" style="left:471.50px;top:702.34px;font:12px 'Liberation Sans',sans-serif;line-height:12px;">...</div>
<div class="t" style="left:493.50px;top:701.47px;font:13.5px 'Liberation Sans',sans-serif;line-height:13.5px;letter-spacing:-0.189px;">D:\Working\Test Result\1041103_2.2.1_Low cost DR_Gin\prom_v8_fpu_qspi.SIGE_16...</div>
</body></html>
